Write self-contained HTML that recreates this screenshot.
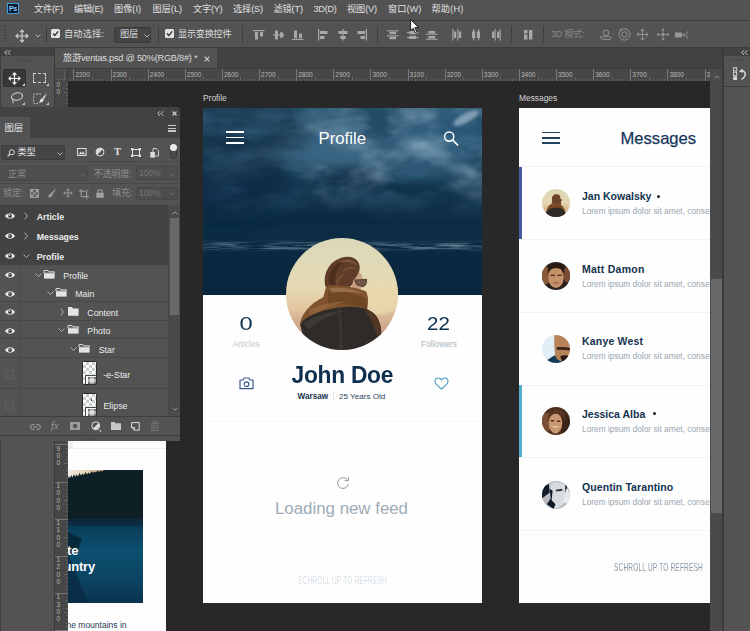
<!DOCTYPE html>
<html lang="zh">
<head>
<meta charset="utf-8">
<title>Photoshop</title>
<style>
html,body{margin:0;padding:0;}
body{width:750px;height:631px;overflow:hidden;background:#282828;position:relative;font-family:"Liberation Sans","Noto Sans CJK SC",sans-serif;color:#ddd;}
.a{position:absolute;}
.t{position:absolute;white-space:nowrap;line-height:1;}
svg{position:absolute;overflow:visible;}
#menubar{left:0;top:0;width:750px;height:20px;background:#535353;}
#menubar .t{font-size:9.2px;color:#e0e0e0;top:5px;letter-spacing:-0.3px;}
#optbar{left:0;top:21px;width:750px;height:26px;background:#535353;}
#optbar .t{font-size:9.2px;color:#dcdcdc;letter-spacing:-0.3px;}
.sep{position:absolute;top:5px;width:1px;height:17px;background:#3e3e3e;}
#tabbar{left:55px;top:48px;width:668px;height:20px;background:#424242;}
#tab{left:0;top:0;width:162px;height:20px;background:#535353;}
#rulerh{left:55px;top:69px;width:655px;height:12px;background:#474747;overflow:hidden;}
#rulerv{left:55px;top:81px;width:13px;height:550px;background:#474747;overflow:hidden;}
.rl{position:absolute;font-size:6.5px;color:#b8b8b8;line-height:1;}
.tk{position:absolute;background:#777;}
#tools{left:0;top:47px;width:54px;height:584px;background:#535353;}
#layers{left:0;top:107px;width:180.3px;height:333.5px;background:#535353;border-top-right-radius:4px;overflow:hidden;}
#vscroll{left:710px;top:69px;width:12px;height:562px;background:#4a4a4a;}
#rpanel{left:724px;top:48px;width:26px;height:583px;background:#535353;}
.ab{background:#fff;overflow:hidden;}
.row{position:absolute;left:0;width:168px;background:#535353;}
.row.dk{background:#424242;}
.row .nm{position:absolute;font-size:9px;color:#e8e8e8;line-height:1;white-space:nowrap;}
.ablabel{font-size:8.4px;color:#d6d6d6;}
.msg .nm{position:absolute;left:63px;font-size:10.5px;font-weight:bold;color:#14324e;white-space:nowrap;line-height:1;}
.msg .lo{position:absolute;left:63px;font-size:8.35px;color:#9aa7b2;white-space:nowrap;line-height:1;}
.msg{position:absolute;left:0;width:200px;height:72px;}
.av{position:absolute;left:23px;width:28px;height:28px;border-radius:50%;overflow:hidden;}
.av svg{width:28px;height:28px;}
</style>
</head>
<body>
<!-- CANVAS -->
<div class="a" id="canvas" style="left:68px;top:81px;width:642px;height:550px;background:#282828;"></div>

<!-- Article artboard (partially visible) -->
<div class="a ab" style="left:68px;top:441px;width:98px;height:190px;background:#fdfdfd;">
  <div class="a" style="left:0;top:0;width:5px;height:7px;background:#eef0f2;"></div>
  <div class="a" style="left:0;top:7px;width:98px;height:1px;background:#efefef;"></div>
  <div class="a" style="left:0;top:29px;width:75px;height:133px;overflow:hidden;background:#0e1f26;">
    <svg width="75" height="133" viewBox="0 0 75 133" style="left:0;top:0;">
      <defs>
        <linearGradient id="wat" x1="0" y1="0" x2="0" y2="1">
          <stop offset="0" stop-color="#0b3a55"/><stop offset="0.35" stop-color="#0a4f6e"/><stop offset="0.7" stop-color="#0b4463"/><stop offset="1" stop-color="#0a3350"/>
        </linearGradient>
        <linearGradient id="skyA" x1="0" y1="0" x2="1" y2="0">
          <stop offset="0" stop-color="#f3ede3"/><stop offset="0.3" stop-color="#e2c9a8"/><stop offset="0.55" stop-color="#b98a5c"/><stop offset="0.7" stop-color="#3a3028"/>
        </linearGradient>
        <filter id="bl1"><feGaussianBlur stdDeviation="1.2"/></filter>
      </defs>
      <rect x="0" y="0" width="75" height="10" fill="url(#skyA)"/>
      <path d="M0,8.5 L1,6 L2,8 L3.5,5 L4.5,7.5 L6,4 L7,7 L8.5,4.5 L10,6.5 L11.5,3 L13,5.5 L14.5,3.5 L16,5 L17.5,2 L19,4.5 L20.5,2.5 L22,4 L23.5,1 L25,3 L26.5,1.5 L28,2.5 L29.5,0.5 L31,2 L32.5,0.5 L34,1.5 L36,0 L75,0 L75,56 L0,56 Z" fill="#0e1f26"/>
      <rect x="0" y="52" width="75" height="81" fill="url(#wat)"/>
      <rect x="0" y="49" width="75" height="7" fill="#0c2c40" filter="url(#bl1)"/>
      <path d="M0,62 L14,69 L10,80 L0,86 Z" fill="#08283c"/>
      <path d="M0,84 L20,132 L0,133 Z" fill="#082c45" opacity="0.85"/>
    </svg>
    <div class="t" style="left:-4.3px;top:73.5px;font-size:13px;font-weight:bold;color:#fff;letter-spacing:-0.2px;">ite</div>
    <div class="t" style="left:-4.5px;top:89.5px;font-size:13px;font-weight:bold;color:#fff;letter-spacing:-0.2px;">untry</div>
  </div>
  <div class="t" style="left:-3.4px;top:179.5px;font-size:8.5px;color:#1f3c55;">ine mountains in</div>
</div>
<!-- Profile artboard -->
<div class="t ablabel" style="left:203px;top:94px;">Profile</div>
<div class="a ab" id="profile" style="left:203px;top:108px;width:279px;height:495px;background:#fefefe;">
  <svg width="279" height="187" viewBox="0 0 279 187" style="left:0;top:0;">
    <defs>
      <linearGradient id="sky" x1="0" y1="0" x2="0" y2="1">
        <stop offset="0" stop-color="#244d68"/><stop offset="0.27" stop-color="#1f4762"/><stop offset="0.45" stop-color="#14374f"/><stop offset="0.58" stop-color="#0c2b43"/><stop offset="0.66" stop-color="#0c2d45"/><stop offset="0.80" stop-color="#0a2840"/><stop offset="1" stop-color="#09263d"/>
      </linearGradient>
      <linearGradient id="fadeUp" x1="0" y1="0" x2="0" y2="1">
        <stop offset="0" stop-color="#fff" stop-opacity="1"/><stop offset="0.35" stop-color="#fff" stop-opacity="0.95"/><stop offset="0.56" stop-color="#fff" stop-opacity="0.15"/><stop offset="0.62" stop-color="#fff" stop-opacity="0"/>
      </linearGradient>
      <linearGradient id="fadeL" x1="0" y1="0" x2="1" y2="0"><stop offset="0" stop-color="#fff" stop-opacity="0.1"/><stop offset="0.25" stop-color="#fff" stop-opacity="0.22"/><stop offset="0.45" stop-color="#fff" stop-opacity="1"/><stop offset="1" stop-color="#fff" stop-opacity="1"/></linearGradient>
      <mask id="mLeft"><rect width="279" height="187" fill="url(#fadeL)"/></mask>
      <mask id="mUp"><rect width="279" height="187" fill="url(#fadeUp)"/></mask>
      <filter id="cloudL" x="0" y="0" width="100%" height="100%">
        <feTurbulence type="fractalNoise" baseFrequency="0.016 0.03" numOctaves="4" seed="7"/>
        <feColorMatrix type="matrix" values="0 0 0 0 0.45  0 0 0 0 0.62  0 0 0 0 0.74  2.6 0 0 0 -1.15"/>
      </filter>
      <filter id="cloudD" x="0" y="0" width="100%" height="100%">
        <feTurbulence type="fractalNoise" baseFrequency="0.014 0.035" numOctaves="4" seed="23"/>
        <feColorMatrix type="matrix" values="0 0 0 0 0.04  0 0 0 0 0.13  0 0 0 0 0.22  0 2.8 0 0 -1.25"/>
      </filter>
      <filter id="wave" x="0" y="0" width="100%" height="100%">
        <feTurbulence type="fractalNoise" baseFrequency="0.03 0.5" numOctaves="3" seed="4"/>
        <feColorMatrix type="matrix" values="0 0 0 0 0.30  0 0 0 0 0.43  0 0 0 0 0.52  3 0 0 0 -1.1"/>
      </filter>
      <linearGradient id="waveFade" x1="0" y1="0" x2="0" y2="1">
        <stop offset="0" stop-color="#fff" stop-opacity="0"/><stop offset="0.45" stop-color="#fff" stop-opacity="1"/><stop offset="0.7" stop-color="#fff" stop-opacity="0.8"/><stop offset="1" stop-color="#fff" stop-opacity="0"/>
      </linearGradient>
      <mask id="mWave"><rect x="0" y="132" width="279" height="12" fill="url(#waveFade)"/></mask>
      <filter id="b8" x="-50%" y="-50%" width="200%" height="200%"><feGaussianBlur stdDeviation="8"/></filter>
      <filter id="b4" x="-50%" y="-50%" width="200%" height="200%"><feGaussianBlur stdDeviation="4"/></filter>
      <filter id="b2" x="-50%" y="-50%" width="200%" height="200%"><feGaussianBlur stdDeviation="1.5"/></filter>
      <clipPath id="skyclip"><rect x="0" y="0" width="279" height="187"/></clipPath>
    </defs>
    <g clip-path="url(#skyclip)">
      <rect width="279" height="187" fill="url(#sky)"/>
      <ellipse cx="10" cy="70" rx="75" ry="45" fill="#0e2c44" filter="url(#b8)" opacity="0.85"/>
      <ellipse cx="25" cy="25" rx="80" ry="45" fill="#12344d" filter="url(#b8)" opacity="0.75"/>
      <ellipse cx="138" cy="42" rx="42" ry="20" fill="#4a7492" filter="url(#b8)" opacity="0.7"/>
      <ellipse cx="235" cy="28" rx="50" ry="26" fill="#2f5c7c" filter="url(#b8)" opacity="0.8"/>
      <ellipse cx="218" cy="52" rx="55" ry="24" fill="#3a6583" filter="url(#b8)" opacity="0.45"/>
      <ellipse cx="205" cy="82" rx="45" ry="8" fill="#102e47" filter="url(#b4)" opacity="0.7"/>
      <ellipse cx="150" cy="70" rx="30" ry="10" fill="#12324c" filter="url(#b4)" opacity="0.7"/>
      <g mask="url(#mUp)">
        <g mask="url(#mLeft)"><rect width="279" height="187" filter="url(#cloudL)" opacity="0.6"/></g>
        <rect width="279" height="187" filter="url(#cloudD)" opacity="0.75"/>
      </g>
      <ellipse cx="263" cy="10" rx="14" ry="4.5" fill="#86a6ba" filter="url(#b2)" transform="rotate(-28 263 10)" opacity="0.9"/>
      <ellipse cx="225" cy="45" rx="16" ry="4" fill="#6f93aa" filter="url(#b4)" transform="rotate(-20 225 45)" opacity="0.7"/>
      <rect x="0" y="114" width="279" height="3" fill="#0a2239" filter="url(#b2)" opacity="0.3"/>
      <g mask="url(#mWave)" opacity="0.6"><rect x="0" y="126" width="279" height="20" filter="url(#wave)"/></g>
    </g>
  </svg>
  <!-- hamburger -->
  <div class="a" style="left:22.5px;top:23.3px;width:18px;height:1.7px;background:#fff;"></div>
  <div class="a" style="left:22.5px;top:28.7px;width:18px;height:1.7px;background:#fff;"></div>
  <div class="a" style="left:22.5px;top:34.1px;width:18px;height:1.7px;background:#fff;"></div>
  <div class="t" id="ptitle" style="left:115.5px;top:22.5px;font-size:16.8px;color:#fff;">Profile</div>
  <svg width="16" height="16" viewBox="0 0 16 16" style="left:240px;top:22px;"><circle cx="6.2" cy="6.6" r="4.6" fill="none" stroke="#fff" stroke-width="1.5"/><path d="M9.6,10 L14.6,15" stroke="#fff" stroke-width="1.7" stroke-linecap="round"/></svg>

  <!-- avatar -->
  <svg width="112" height="112" viewBox="30 18 590 590" style="left:82.8px;top:130.4px;">
    <defs>
      <linearGradient id="avbg" x1="0" y1="0" x2="0" y2="1">
        <stop offset="0" stop-color="#dbd9b9"/><stop offset="0.45" stop-color="#e6d9b3"/><stop offset="0.62" stop-color="#e3c79f"/><stop offset="0.78" stop-color="#cfa98c"/><stop offset="1" stop-color="#a58f86"/>
      </linearGradient>
      <clipPath id="avc"><circle cx="325" cy="313" r="295"/></clipPath>
      <filter id="b6" x="-50%" y="-50%" width="200%" height="200%"><feGaussianBlur stdDeviation="6"/></filter>
    </defs>
    <g clip-path="url(#avc)">
      <rect x="30" y="18" width="590" height="590" fill="url(#avbg)"/>
      <ellipse cx="520" cy="330" rx="120" ry="90" fill="#ead9ae" filter="url(#b6)" opacity="0.8"/>
      <path d="M400,190 C428,200 438,225 432,246 L438,262 L424,288 L385,296 L372,250 Z" fill="#c9a183"/>
      <ellipse cx="398" cy="262" rx="24" ry="24" fill="#c49a7c"/>
      <path d="M238,275 C222,200 262,132 340,118 C398,110 428,150 416,192 C408,215 396,232 384,240 C382,262 372,276 350,282 C300,290 252,292 238,275 Z" fill="#5f3c27"/>
      <path d="M255,255 C250,200 285,150 345,132 C300,165 285,210 290,272 Z" fill="#452a1b" opacity="0.75"/>
      <path d="M300,150 C340,125 390,130 405,165 C380,140 340,140 300,150 Z" fill="#8c6448" opacity="0.8"/>
      <path d="M320,200 C340,170 380,160 408,185 C385,175 350,180 320,200 Z" fill="#86593c" opacity="0.7"/>
      <path d="M290,255 C295,225 320,205 350,200 C330,215 310,235 305,270 Z" fill="#7a5138" opacity="0.6"/>
      <path d="M390,236 L456,233 C460,252 452,272 436,277 L408,270 C398,262 392,252 390,236 Z" fill="#5c4638"/>
      <path d="M400,242 L450,240 C451,252 446,264 436,268 L412,263 C405,258 402,250 400,242 Z" fill="#8a6a55" opacity="0.55"/>
      <path d="M242,272 C300,258 400,278 452,300 C466,330 464,368 457,392 C400,372 330,382 252,402 C182,422 132,442 104,474 C108,420 160,360 226,330 Z" fill="#80532f"/>
      <path d="M250,300 C320,290 400,310 450,340 C455,360 458,378 457,392 C400,365 330,360 250,375 Z" fill="#66401f" opacity="0.65"/>
      <path d="M262,282 C320,272 390,290 440,310 C400,305 330,298 270,305 Z" fill="#a37b55" opacity="0.7"/>
      <path d="M150,400 C200,370 280,350 360,352 C300,365 220,390 160,430 Z" fill="#9a6c42" opacity="0.6"/>
      <path d="M104,474 C130,432 200,402 300,386 C380,376 440,380 470,400 C512,420 532,470 532,520 L500,610 L140,610 Z" fill="#2f2b29"/>
      <path d="M120,470 C170,430 260,405 350,398 C280,420 200,445 150,500 Z" fill="#4a423e" opacity="0.6"/>
      <path d="M300,390 C310,450 312,530 310,610 L330,610 C330,520 322,440 318,388 Z" fill="#3e3835" opacity="0.8"/>
      <path d="M470,400 C512,420 532,470 532,520 L520,560 C500,500 480,440 440,395 Z" fill="#5a3a26" opacity="0.8"/>
    </g>
  </svg>

  <div class="t" style="left:34.5px;top:206.3px;font-size:19px;color:#0e3050;width:16px;text-align:center;transform:scaleX(1.25);transform-origin:50% 50%;">0</div>
  <div class="t" id="art" style="left:29.5px;top:232px;font-size:8.3px;color:#c2cbd3;">Articles</div>
  <div class="t" style="left:224px;top:206px;font-size:19px;color:#0e3050;transform:scaleX(1.08);transform-origin:0 50%;">22</div>
  <div class="t" id="fol" style="left:218px;top:232px;font-size:8.4px;color:#a9b6c0;">Followers</div>

  <svg width="15" height="13" viewBox="0 0 15 13" style="left:35.5px;top:268.5px;"><path d="M1,3 H4 L5.2,1 H9.8 L11,3 H14 V11.6 H1 Z" fill="none" stroke="#3b5b8f" stroke-width="1.2" stroke-linejoin="round"/><circle cx="7.5" cy="7.2" r="2.3" fill="none" stroke="#3b5b8f" stroke-width="1.2"/></svg>
  <svg width="15" height="13" viewBox="0 0 15 13" style="left:230.5px;top:268.5px;"><path d="M7.5,12 C4,9.3 1,7 1,4.2 C1,2.3 2.4,1 4.1,1 C5.5,1 6.8,1.8 7.5,3.1 C8.2,1.8 9.5,1 10.9,1 C12.6,1 14,2.3 14,4.2 C14,7 11,9.3 7.5,12 Z" fill="none" stroke="#4a9cc0" stroke-width="1.1" stroke-linejoin="round"/></svg>

  <div class="t" id="jd" style="left:88.6px;top:255.5px;font-size:22.8px;font-weight:bold;color:#0e2f4f;letter-spacing:-0.3px;transform:scaleY(1.06);transform-origin:50% 85%;">John Doe</div>
  <div class="t" id="wa" style="left:94.5px;top:285.3px;font-size:8.2px;font-weight:bold;color:#14324e;">Warsaw</div>
  <div class="a" style="left:130px;top:283px;width:1px;height:10px;background:#e3e6e9;"></div>
  <div class="t" id="yo" style="left:136px;top:285.3px;font-size:8.1px;color:#2c4660;">25 Years Old</div>
  <div class="a" style="left:0;top:312.5px;width:279px;height:1px;background:#f5f6f7;"></div>

  <svg width="16" height="14" viewBox="0 0 16 14" style="left:132px;top:368px;"><path d="M12.6,4.2 A5.4,5.4 0 1 0 13.3,8.2" fill="none" stroke="#8c9ca8" stroke-width="1"/><path d="M13.4,0.8 V4.6 H9.6" fill="none" stroke="#8c9ca8" stroke-width="1"/></svg>
  <div class="t" id="lnf" style="left:72px;top:392.5px;font-size:16.85px;color:#9dacb7;">Loading new feed</div>
  <div class="t" id="sc1" style="left:95px;top:466.5px;font-size:11px;color:#d9e0e5;transform:scaleX(0.595);transform-origin:0 50%;letter-spacing:0.3px;">SCHROLL UP TO REFRESH</div>
</div>
<!-- Messages artboard -->
<div class="t ablabel" style="left:519px;top:94px;">Messages</div>
<div class="a ab" id="messages" style="left:519px;top:108px;width:191px;height:495px;background:#fefefe;">
  <div class="a" style="left:22.5px;top:23.5px;width:18.5px;height:1.7px;background:#1d4461;"></div>
  <div class="a" style="left:22.5px;top:28.9px;width:18.5px;height:1.7px;background:#1d4461;"></div>
  <div class="a" style="left:22.5px;top:34.3px;width:18.5px;height:1.7px;background:#1d4461;"></div>
  <div class="t" id="mtitle" style="left:101.5px;top:22.5px;font-size:16.6px;color:#14365a;-webkit-text-stroke:0.25px #14365a;">Messages</div>
  <div class="a" style="left:0;top:58px;width:191px;height:1px;background:#f1f2f3;"></div>

  <!-- rows -->
  <div class="msg" style="top:59px;">
    <div class="a" style="left:0;top:0;width:2.5px;height:73px;background:#4a5ba0;"></div>
    <div class="av" style="top:22.4px;">
      <svg width="29" height="29" viewBox="0 0 29 29" style="left:0;top:0;">
        <defs><linearGradient id="a1" x1="0" y1="0" x2="0" y2="1"><stop offset="0" stop-color="#dbd8b8"/><stop offset="0.5" stop-color="#e6d6b0"/><stop offset="0.75" stop-color="#d9b48e"/><stop offset="1" stop-color="#b49a88"/></linearGradient></defs>
        <rect width="29" height="29" fill="url(#a1)"/>
        <path d="M10.5,11 C9.5,7 13,5 16,5.5 C18.5,6 19.5,8 19,10 L21,11.5 L19.5,13 C20,14 20,15 19.5,16 L10,15 Z" fill="#6b432a"/>
        <path d="M5,21 C6,17 10,15 14,14 C17,14 19,15 20.5,17 C23,19 24,22 24,25 L22,29 L6,29 Z" fill="#7a4a26"/>
        <path d="M4,24 C6,20.5 12,19 17,19.5 C21,20 24,23 24.5,26 L23,30 L5,30 Z" fill="#2d2927"/>
      </svg>
    </div>
    <div class="nm" id="n1" style="top:24px;">Jan Kowalsky</div>
    <div class="a" style="left:137.5px;top:27.5px;width:3px;height:3px;border-radius:50%;background:#222;"></div>
    <div class="lo" style="top:40px;"><span class="lo1">Lorem ipsum dolor sit amet,</span> consectetur</div>
  </div>
  <div class="a" style="left:0;top:131.2px;width:191px;height:1px;background:#f1f2f3;"></div>

  <div class="msg" style="top:131.6px;">
    <div class="av" style="top:22.4px;">
      <svg width="29" height="29" viewBox="0 0 29 29" style="left:0;top:0;">
        <rect width="29" height="29" fill="#2a211c"/>
        <ellipse cx="4" cy="14" rx="5" ry="9" fill="#8a5a3a"/>
        <ellipse cx="26" cy="13" rx="4" ry="8" fill="#7a4c30"/>
        <ellipse cx="14.5" cy="16" rx="8" ry="11" fill="#c4916a"/>
        <path d="M6,13 C5,5 10,1.5 15,1.5 C20,1.5 24,5 23,13 C22,8 19,6.5 14.5,6.5 C10,6.5 7,8 6,13 Z" fill="#2a1a12"/>
        <rect x="9" y="13" width="4.5" height="1.6" fill="#5a3826"/><rect x="16" y="13" width="4.5" height="1.6" fill="#5a3826"/>
        <rect x="11.5" y="21" width="6" height="1.2" fill="#8a5a44"/>
      </svg>
    </div>
    <div class="nm" id="n2" style="top:24px;letter-spacing:0.25px;">Matt Damon</div>
    <div class="lo" style="top:40px;"><span class="lo1">Lorem ipsum dolor sit amet,</span> consectetur</div>
  </div>
  <div class="a" style="left:0;top:203.8px;width:191px;height:1px;background:#f1f2f3;"></div>

  <div class="msg" style="top:204.2px;">
    <div class="av" style="top:22.4px;">
      <svg width="29" height="29" viewBox="0 0 29 29" style="left:0;top:0;">
        <rect width="29" height="29" fill="#e1eef5"/>
        <path d="M4,27 L13,21 L22,26 L20,30 L4,30 Z" fill="#143a55"/>
        <path d="M13,0 C20,-1 29,4 30,14 C30,22 26,27 21,27.5 C17,27 14,24 13.5,20 C13,14 12,6 13,0 Z" fill="#b9835a"/>
        <path d="M15,13 C18,12 24,12.5 29,13.5 L29,16 C24,15 19,15 15.5,15.5 Z" fill="#3a2418"/>
        <path d="M19,22 C22,20.5 26,21 28,22 C27,26 24,28 21,27.5 C20,26 19.5,24 19,22 Z" fill="#2a1a14"/>
      </svg>
    </div>
    <div class="nm" id="n3" style="top:24px;letter-spacing:0.18px;">Kanye West</div>
    <div class="lo" style="top:40px;"><span class="lo1">Lorem ipsum dolor sit amet,</span> consectetur</div>
  </div>
  <div class="a" style="left:0;top:276.5px;width:191px;height:1px;background:#f1f2f3;"></div>

  <div class="msg" style="top:276.8px;">
    <div class="a" style="left:0;top:0;width:2.5px;height:73px;background:#58aed0;"></div>
    <div class="av" style="top:22.4px;">
      <svg width="29" height="29" viewBox="0 0 29 29" style="left:0;top:0;">
        <rect width="29" height="29" fill="#4a2e1e"/>
        <ellipse cx="5" cy="16" rx="5" ry="10" fill="#7a4e30"/>
        <ellipse cx="24" cy="18" rx="5" ry="10" fill="#3a2418"/>
        <ellipse cx="14" cy="17" rx="7" ry="10.5" fill="#c99870"/>
        <path d="M6,16 C5,7 10,2 15,2 C21,2 25,8 24,16 C22,9 18,6 13,7 C9,8 7,11 6,16 Z" fill="#5a3620"/>
        <path d="M10,19.5 C12,22 16,22 18,19.5 C16,20.5 12,20.5 10,19.5 Z" fill="#f0e0d0"/>
        <rect x="9" y="13.5" width="3.5" height="1.4" fill="#3a2418"/><rect x="15.5" y="14" width="3.5" height="1.4" fill="#3a2418"/>
      </svg>
    </div>
    <div class="nm" id="n4" style="top:24px;">Jessica Alba</div>
    <div class="a" style="left:133.5px;top:27.5px;width:3px;height:3px;border-radius:50%;background:#222;"></div>
    <div class="lo" style="top:40px;"><span class="lo1">Lorem ipsum dolor sit amet,</span> consectetur</div>
  </div>
  <div class="a" style="left:0;top:349.3px;width:191px;height:1px;background:#f1f2f3;"></div>

  <div class="msg" style="top:350.3px;">
    <div class="av" style="top:22.4px;">
      <svg width="29" height="29" viewBox="0 0 29 29" style="left:0;top:0;">
        <rect width="29" height="29" fill="#b8bcbf"/>
        <path d="M0,6 L7,3 L8,12 L0,18 Z" fill="#101c28"/>
        <path d="M9,3 C14,0 22,1 25,6 L25,20 C22,26 16,29 12,28 L9,20 Z" fill="#d9dcde"/>
        <path d="M8,8 L11,10 L10,20 L14,24 L12,29 L5,24 L9,18 Z" fill="#0e1a26"/>
        <path d="M14,9 L21,8 L21,10 L15,11 Z" fill="#2a323a"/>
        <path d="M24,4 L26,6 L25.5,14 L24,12 Z" fill="#1a2630"/>
        <path d="M25,8 C29,10 30,18 28,24 L22,22 Z" fill="#e8eaeb"/>
      </svg>
    </div>
    <div class="nm" id="n5" style="top:24px;letter-spacing:0.1px;">Quentin Tarantino</div>
    <div class="lo" style="top:40px;"><span class="lo1">Lorem ipsum dolor sit amet,</span> consectetur</div>
  </div>
  <div class="a" style="left:0;top:421.8px;width:191px;height:1px;background:#f1f2f3;"></div>
  <div class="a" style="left:0;top:423px;width:191px;height:72px;background:#fdfdfd;"></div>

  <div class="t" id="sc2" style="left:95px;top:454px;font-size:11px;color:#8b9aa8;transform:scaleX(0.595);transform-origin:0 50%;letter-spacing:0.3px;">SCHROLL UP TO REFRESH</div>
</div>
<!-- MENU BAR -->
<div class="a" id="menubar">
  <div class="a" style="left:7px;top:3px;width:12px;height:11px;background:#0b1b33;box-shadow:inset 0 0 0 1px #3fa0dc;"></div>
  <div class="t" style="left:9px;top:5px;font-size:7px;font-weight:bold;color:#8fd0ff;letter-spacing:-0.3px;">Ps</div>
  <div class="t" id="m1" style="letter-spacing:-0.22px;left:34px;">文件(F)</div>
  <div class="t" id="m2" style="left:74px;">编辑(E)</div>
  <div class="t" id="m3" style="letter-spacing:0px;left:114px;">图像(I)</div>
  <div class="t" id="m4" style="letter-spacing:0px;left:152.5px;">图层(L)</div>
  <div class="t" id="m5" style="letter-spacing:-0.24px;left:193px;">文字(Y)</div>
  <div class="t" id="m6" style="letter-spacing:-0.12px;left:233px;">选择(S)</div>
  <div class="t" id="m7" style="letter-spacing:-0.14px;left:273.5px;">滤镜(T)</div>
  <div class="t" id="m8" style="left:313.5px;">3D(D)</div>
  <div class="t" id="m9" style="letter-spacing:-0.12px;left:347px;">视图(V)</div>
  <div class="t" id="m10" style="letter-spacing:0.04px;left:388px;">窗口(W)</div>
  <div class="t" id="m11" style="letter-spacing:0.18px;left:431.5px;">帮助(H)</div>
</div>
<div class="a" style="left:0;top:20px;width:750px;height:1px;background:#3c3c3c;"></div>

<!-- OPTIONS BAR -->
<div class="a" id="optbar">
  <!-- grip -->
  <div class="a" style="left:4px;top:5px;width:2px;height:17px;background:repeating-linear-gradient(to bottom,#3e3e3e 0,#3e3e3e 1px,transparent 1px,transparent 3px);"></div>
  <!-- move icon -->
  <svg width="14" height="14" viewBox="0 0 14 14" style="left:15px;top:7.5px;"><g fill="none" stroke="#d8d8d8" stroke-width="1.1"><path d="M7,1.2 V12.8 M1.2,7 H12.8"/><path d="M5,3.2 L7,1 L9,3.2 M5,10.8 L7,13 L9,10.8 M3.2,5 L1,7 L3.2,9 M10.8,5 L13,7 L10.8,9"/></g></svg>
  <svg width="6" height="4" viewBox="0 0 6 4" style="left:34.5px;top:13px;"><path d="M0.5,0.5 L3,3 L5.5,0.5" fill="none" stroke="#bdbdbd" stroke-width="0.9"/></svg>
  <div class="sep" style="left:46px;"></div>
  <!-- checkbox 1 -->
  <div class="a" style="left:51px;top:8px;width:9px;height:9px;background:#e2e2e2;border-radius:1.5px;"></div>
  <svg width="9" height="9" viewBox="0 0 9 9" style="left:51px;top:8px;"><path d="M2,4.4 L3.9,6.4 L7.2,2.4" fill="none" stroke="#333" stroke-width="1.4"/></svg>
  <div class="t" id="o1" style="letter-spacing:0.14px;left:64px;top:9px;">自动选择:</div>
  <div class="a" style="left:113.5px;top:5.5px;width:37px;height:16px;background:#454545;border:1px solid #3a3a3a;box-sizing:border-box;border-radius:2px;"></div>
  <div class="t" id="o2" style="left:120px;top:9.3px;">图层</div>
  <svg width="6" height="4" viewBox="0 0 6 4" style="left:143.5px;top:12.5px;"><path d="M0.5,0.5 L3,3 L5.5,0.5" fill="none" stroke="#bdbdbd" stroke-width="0.9"/></svg>
  <div class="sep" style="left:158px;"></div>
  <!-- checkbox 2 -->
  <div class="a" style="left:165px;top:8px;width:9px;height:9px;background:#e2e2e2;border-radius:1.5px;"></div>
  <svg width="9" height="9" viewBox="0 0 9 9" style="left:165px;top:8px;"><path d="M2,4.4 L3.9,6.4 L7.2,2.4" fill="none" stroke="#333" stroke-width="1.4"/></svg>
  <div class="t" id="o3" style="left:178px;top:9px;">显示变换控件</div>
  <div class="sep" style="left:242px;"></div>

  <!-- align icons group 1 (vertical aligns) -->
  <svg width="12" height="10" viewBox="0 0 12 10" style="left:253px;top:8.5px;"><g fill="#a8a8a8"><rect x="0" y="0" width="11.5" height="1.2"/><rect x="2" y="2" width="3" height="7.5"/><rect x="7" y="2" width="3" height="4.5"/></g></svg>
  <svg width="12" height="10" viewBox="0 0 12 10" style="left:272.5px;top:8.5px;"><g fill="#a8a8a8"><rect x="0" y="4.4" width="11.5" height="1.2"/><rect x="2" y="0.5" width="3" height="9"/><rect x="7" y="2.3" width="3" height="5.4"/></g></svg>
  <svg width="12" height="10" viewBox="0 0 12 10" style="left:292px;top:8.5px;"><g fill="#a8a8a8"><rect x="0" y="8.8" width="11.5" height="1.2"/><rect x="2" y="0.5" width="3" height="7.5"/><rect x="7" y="3.5" width="3" height="4.5"/></g></svg>
  <!-- align icons group 2 (horizontal aligns) -->
  <svg width="10" height="12" viewBox="0 0 10 12" style="left:318px;top:7.5px;"><g fill="#a8a8a8"><rect x="0" y="0" width="1.2" height="11.5"/><rect x="2" y="2" width="7.5" height="3"/><rect x="2" y="7" width="4.5" height="3"/></g></svg>
  <svg width="10" height="12" viewBox="0 0 10 12" style="left:338px;top:7.5px;"><g fill="#a8a8a8"><rect x="4.4" y="0" width="1.2" height="11.5"/><rect x="0.5" y="2" width="9" height="3"/><rect x="2.3" y="7" width="5.4" height="3"/></g></svg>
  <svg width="10" height="12" viewBox="0 0 10 12" style="left:356.5px;top:7.5px;"><g fill="#a8a8a8"><rect x="8.8" y="0" width="1.2" height="11.5"/><rect x="0.5" y="2" width="7.5" height="3"/><rect x="3.5" y="7" width="4.5" height="3"/></g></svg>
  <div class="sep" style="left:377px;"></div>
  <!-- distribute group 1 -->
  <svg width="12" height="10" viewBox="0 0 12 10" style="left:387px;top:8.5px;"><g fill="#a8a8a8"><rect x="0" y="0.3" width="11.5" height="1.1"/><rect x="2.5" y="1.8" width="6.5" height="2.4"/><rect x="0" y="5.3" width="11.5" height="1.1"/><rect x="2.5" y="6.8" width="6.5" height="2.4"/></g></svg>
  <svg width="12" height="10" viewBox="0 0 12 10" style="left:406.5px;top:8.5px;"><g fill="#a8a8a8"><rect x="0" y="2.2" width="11.5" height="1.1"/><rect x="2.5" y="1" width="6.5" height="3.2"/><rect x="0" y="7" width="11.5" height="1.1"/><rect x="2.5" y="5.8" width="6.5" height="3.2"/></g></svg>
  <svg width="12" height="10" viewBox="0 0 12 10" style="left:426px;top:8.5px;"><g fill="#a8a8a8"><rect x="0" y="3.6" width="11.5" height="1.1"/><rect x="2.5" y="1" width="6.5" height="2.4"/><rect x="0" y="8.6" width="11.5" height="1.1"/><rect x="2.5" y="6" width="6.5" height="2.4"/></g></svg>
  <!-- distribute group 2 -->
  <svg width="10" height="12" viewBox="0 0 10 12" style="left:452px;top:7.5px;"><g fill="#a8a8a8"><rect x="0.3" y="0" width="1.1" height="11.5"/><rect x="1.8" y="2.5" width="2.4" height="6.5"/><rect x="5.3" y="0" width="1.1" height="11.5"/><rect x="6.8" y="2.5" width="2.4" height="6.5"/></g></svg>
  <svg width="10" height="12" viewBox="0 0 10 12" style="left:471px;top:7.5px;"><g fill="#a8a8a8"><rect x="2.2" y="0" width="1.1" height="11.5"/><rect x="1" y="2.5" width="3.2" height="6.5"/><rect x="7" y="0" width="1.1" height="11.5"/><rect x="5.8" y="2.5" width="3.2" height="6.5"/></g></svg>
  <svg width="10" height="12" viewBox="0 0 10 12" style="left:491px;top:7.5px;"><g fill="#a8a8a8"><rect x="3.6" y="0" width="1.1" height="11.5"/><rect x="1" y="2.5" width="2.4" height="6.5"/><rect x="8.6" y="0" width="1.1" height="11.5"/><rect x="6" y="2.5" width="2.4" height="6.5"/></g></svg>
  <div class="sep" style="left:511px;"></div>
  <svg width="9" height="10" viewBox="0 0 9 10" style="left:524px;top:8.5px;"><g fill="#a8a8a8"><rect x="0" y="0" width="3.4" height="3.5"/><rect x="0" y="4.5" width="3.4" height="5"/><rect x="5" y="0" width="3.4" height="9.5"/></g></svg>
  <div class="sep" style="left:543px;"></div>
  <div class="t" id="o4" style="left:551px;top:9px;color:#858585;">3D 模式:</div>
  <!-- 3D icons -->
  <svg width="13" height="12" viewBox="0 0 13 12" style="left:599px;top:8px;"><g fill="none" stroke="#969696" stroke-width="1"><circle cx="7" cy="3.8" r="2.8"/><path d="M1,8.5 C3,6 6,9 8,7.5 C10,6.5 12,8 12,9.5 C11,11 3,11 1,8.5 Z"/></g></svg>
  <svg width="13" height="13" viewBox="0 0 13 13" style="left:617.5px;top:7px;"><g fill="none" stroke="#969696" stroke-width="1"><circle cx="6.5" cy="6.5" r="5.6"/><circle cx="6.5" cy="6.5" r="2.8"/><path d="M1.5,2.2 L3.2,1.2 L3.4,3.2" stroke-width="0.8"/></g></svg>
  <svg width="13" height="13" viewBox="0 0 14 14" style="left:636px;top:7px;"><g fill="none" stroke="#969696" stroke-width="1"><path d="M7,1.2 V12.8 M1.2,7 H12.8"/><path d="M5,3.2 L7,1 L9,3.2 M5,10.8 L7,13 L9,10.8 M3.2,5 L1,7 L3.2,9 M10.8,5 L13,7 L10.8,9"/></g></svg>
  <svg width="14" height="13" viewBox="0 0 14 13" style="left:655.5px;top:7px;"><g fill="#969696"><circle cx="7" cy="6.5" r="1.8"/><path d="M7,0.3 L8.8,2.6 H5.2 Z M7,12.7 L8.8,10.4 H5.2 Z M0.5,6.5 L2.9,4.8 V8.2 Z M13.5,6.5 L11.1,4.8 V8.2 Z"/><rect x="6.6" y="2.6" width="0.8" height="2"/><rect x="6.6" y="8.4" width="0.8" height="2"/><rect x="2.9" y="6.1" width="2" height="0.8"/><rect x="9.1" y="6.1" width="2" height="0.8"/></g></svg>
  <svg width="15" height="10" viewBox="0 0 15 10" style="left:675px;top:8.5px;"><rect x="0" y="2.5" width="7" height="5" fill="#969696"/><path d="M7,5 L9.5,3 V7 Z" fill="#969696"/><path d="M13.2,1 L10.8,5 L13.2,9" fill="none" stroke="#969696" stroke-width="0.9"/></svg>
</div>
<div class="a" style="left:0;top:47px;width:750px;height:1px;background:#3c3c3c;"></div>

<!-- TAB BAR -->
<div class="a" id="tabbar">
  <div class="a" id="tab"></div>
  <div class="t" id="tabt" style="left:8px;top:5.5px;font-size:9.2px;color:#dedede;letter-spacing:-0.22px;">旅游ventas.psd @ 50%(RGB/8#) *</div>
  <svg width="6" height="6" viewBox="0 0 6 6" style="left:149px;top:7.5px;"><path d="M0.7,0.7 L5.3,5.3 M5.3,0.7 L0.7,5.3" stroke="#cfcfcf" stroke-width="1.1"/></svg>
</div>
<div class="a" style="left:55px;top:68px;width:668px;height:1px;background:#3c3c3c;"></div>
<div class="a" id="rulerh">
<div class="a" style="left:0;top:0;width:13px;height:12px;background:#4b4b4b;border-right:1px solid #3e3e3e;box-sizing:border-box;"></div><div class="a" style="left:1px;top:10px;width:10px;height:1px;background:repeating-linear-gradient(to right,#6a6a6a 0,#6a6a6a 1px,transparent 1px,transparent 2px);"></div><div class="a" style="left:9px;top:1px;width:1px;height:10px;background:repeating-linear-gradient(to bottom,#6a6a6a 0,#6a6a6a 1px,transparent 1px,transparent 2px);"></div>
<div class="tk" style="left:14.69px;top:10px;width:1px;height:2px;opacity:.6;"></div>
<div class="tk" style="left:18.40px;top:0;width:1px;height:12px;"></div>
<div class="rl" style="left:20.40px;top:3px;">2200</div>
<div class="tk" style="left:22.11px;top:10px;width:1px;height:2px;opacity:.6;"></div>
<div class="tk" style="left:25.83px;top:10px;width:1px;height:2px;opacity:.6;"></div>
<div class="tk" style="left:29.54px;top:10px;width:1px;height:2px;opacity:.6;"></div>
<div class="tk" style="left:33.25px;top:10px;width:1px;height:2px;opacity:.6;"></div>
<div class="tk" style="left:36.97px;top:8px;width:1px;height:4px;opacity:.6;"></div>
<div class="tk" style="left:40.68px;top:10px;width:1px;height:2px;opacity:.6;"></div>
<div class="tk" style="left:44.39px;top:10px;width:1px;height:2px;opacity:.6;"></div>
<div class="tk" style="left:48.10px;top:10px;width:1px;height:2px;opacity:.6;"></div>
<div class="tk" style="left:51.82px;top:10px;width:1px;height:2px;opacity:.6;"></div>
<div class="tk" style="left:55.53px;top:0;width:1px;height:12px;"></div>
<div class="rl" style="left:57.53px;top:3px;">2300</div>
<div class="tk" style="left:59.24px;top:10px;width:1px;height:2px;opacity:.6;"></div>
<div class="tk" style="left:62.96px;top:10px;width:1px;height:2px;opacity:.6;"></div>
<div class="tk" style="left:66.67px;top:10px;width:1px;height:2px;opacity:.6;"></div>
<div class="tk" style="left:70.38px;top:10px;width:1px;height:2px;opacity:.6;"></div>
<div class="tk" style="left:74.10px;top:8px;width:1px;height:4px;opacity:.6;"></div>
<div class="tk" style="left:77.81px;top:10px;width:1px;height:2px;opacity:.6;"></div>
<div class="tk" style="left:81.52px;top:10px;width:1px;height:2px;opacity:.6;"></div>
<div class="tk" style="left:85.23px;top:10px;width:1px;height:2px;opacity:.6;"></div>
<div class="tk" style="left:88.95px;top:10px;width:1px;height:2px;opacity:.6;"></div>
<div class="tk" style="left:92.66px;top:0;width:1px;height:12px;"></div>
<div class="rl" style="left:94.66px;top:3px;">2400</div>
<div class="tk" style="left:96.37px;top:10px;width:1px;height:2px;opacity:.6;"></div>
<div class="tk" style="left:100.09px;top:10px;width:1px;height:2px;opacity:.6;"></div>
<div class="tk" style="left:103.80px;top:10px;width:1px;height:2px;opacity:.6;"></div>
<div class="tk" style="left:107.51px;top:10px;width:1px;height:2px;opacity:.6;"></div>
<div class="tk" style="left:111.23px;top:8px;width:1px;height:4px;opacity:.6;"></div>
<div class="tk" style="left:114.94px;top:10px;width:1px;height:2px;opacity:.6;"></div>
<div class="tk" style="left:118.65px;top:10px;width:1px;height:2px;opacity:.6;"></div>
<div class="tk" style="left:122.36px;top:10px;width:1px;height:2px;opacity:.6;"></div>
<div class="tk" style="left:126.08px;top:10px;width:1px;height:2px;opacity:.6;"></div>
<div class="tk" style="left:129.79px;top:0;width:1px;height:12px;"></div>
<div class="rl" style="left:131.79px;top:3px;">2500</div>
<div class="tk" style="left:133.50px;top:10px;width:1px;height:2px;opacity:.6;"></div>
<div class="tk" style="left:137.22px;top:10px;width:1px;height:2px;opacity:.6;"></div>
<div class="tk" style="left:140.93px;top:10px;width:1px;height:2px;opacity:.6;"></div>
<div class="tk" style="left:144.64px;top:10px;width:1px;height:2px;opacity:.6;"></div>
<div class="tk" style="left:148.36px;top:8px;width:1px;height:4px;opacity:.6;"></div>
<div class="tk" style="left:152.07px;top:10px;width:1px;height:2px;opacity:.6;"></div>
<div class="tk" style="left:155.78px;top:10px;width:1px;height:2px;opacity:.6;"></div>
<div class="tk" style="left:159.49px;top:10px;width:1px;height:2px;opacity:.6;"></div>
<div class="tk" style="left:163.21px;top:10px;width:1px;height:2px;opacity:.6;"></div>
<div class="tk" style="left:166.92px;top:0;width:1px;height:12px;"></div>
<div class="rl" style="left:168.92px;top:3px;">2600</div>
<div class="tk" style="left:170.63px;top:10px;width:1px;height:2px;opacity:.6;"></div>
<div class="tk" style="left:174.35px;top:10px;width:1px;height:2px;opacity:.6;"></div>
<div class="tk" style="left:178.06px;top:10px;width:1px;height:2px;opacity:.6;"></div>
<div class="tk" style="left:181.77px;top:10px;width:1px;height:2px;opacity:.6;"></div>
<div class="tk" style="left:185.49px;top:8px;width:1px;height:4px;opacity:.6;"></div>
<div class="tk" style="left:189.20px;top:10px;width:1px;height:2px;opacity:.6;"></div>
<div class="tk" style="left:192.91px;top:10px;width:1px;height:2px;opacity:.6;"></div>
<div class="tk" style="left:196.62px;top:10px;width:1px;height:2px;opacity:.6;"></div>
<div class="tk" style="left:200.34px;top:10px;width:1px;height:2px;opacity:.6;"></div>
<div class="tk" style="left:204.05px;top:0;width:1px;height:12px;"></div>
<div class="rl" style="left:206.05px;top:3px;">2700</div>
<div class="tk" style="left:207.76px;top:10px;width:1px;height:2px;opacity:.6;"></div>
<div class="tk" style="left:211.48px;top:10px;width:1px;height:2px;opacity:.6;"></div>
<div class="tk" style="left:215.19px;top:10px;width:1px;height:2px;opacity:.6;"></div>
<div class="tk" style="left:218.90px;top:10px;width:1px;height:2px;opacity:.6;"></div>
<div class="tk" style="left:222.62px;top:8px;width:1px;height:4px;opacity:.6;"></div>
<div class="tk" style="left:226.33px;top:10px;width:1px;height:2px;opacity:.6;"></div>
<div class="tk" style="left:230.04px;top:10px;width:1px;height:2px;opacity:.6;"></div>
<div class="tk" style="left:233.75px;top:10px;width:1px;height:2px;opacity:.6;"></div>
<div class="tk" style="left:237.47px;top:10px;width:1px;height:2px;opacity:.6;"></div>
<div class="tk" style="left:241.18px;top:0;width:1px;height:12px;"></div>
<div class="rl" style="left:243.18px;top:3px;">2800</div>
<div class="tk" style="left:244.89px;top:10px;width:1px;height:2px;opacity:.6;"></div>
<div class="tk" style="left:248.61px;top:10px;width:1px;height:2px;opacity:.6;"></div>
<div class="tk" style="left:252.32px;top:10px;width:1px;height:2px;opacity:.6;"></div>
<div class="tk" style="left:256.03px;top:10px;width:1px;height:2px;opacity:.6;"></div>
<div class="tk" style="left:259.75px;top:8px;width:1px;height:4px;opacity:.6;"></div>
<div class="tk" style="left:263.46px;top:10px;width:1px;height:2px;opacity:.6;"></div>
<div class="tk" style="left:267.17px;top:10px;width:1px;height:2px;opacity:.6;"></div>
<div class="tk" style="left:270.88px;top:10px;width:1px;height:2px;opacity:.6;"></div>
<div class="tk" style="left:274.60px;top:10px;width:1px;height:2px;opacity:.6;"></div>
<div class="tk" style="left:278.31px;top:0;width:1px;height:12px;"></div>
<div class="rl" style="left:280.31px;top:3px;">2900</div>
<div class="tk" style="left:282.02px;top:10px;width:1px;height:2px;opacity:.6;"></div>
<div class="tk" style="left:285.74px;top:10px;width:1px;height:2px;opacity:.6;"></div>
<div class="tk" style="left:289.45px;top:10px;width:1px;height:2px;opacity:.6;"></div>
<div class="tk" style="left:293.16px;top:10px;width:1px;height:2px;opacity:.6;"></div>
<div class="tk" style="left:296.88px;top:8px;width:1px;height:4px;opacity:.6;"></div>
<div class="tk" style="left:300.59px;top:10px;width:1px;height:2px;opacity:.6;"></div>
<div class="tk" style="left:304.30px;top:10px;width:1px;height:2px;opacity:.6;"></div>
<div class="tk" style="left:308.01px;top:10px;width:1px;height:2px;opacity:.6;"></div>
<div class="tk" style="left:311.73px;top:10px;width:1px;height:2px;opacity:.6;"></div>
<div class="tk" style="left:315.44px;top:0;width:1px;height:12px;"></div>
<div class="rl" style="left:317.44px;top:3px;">3000</div>
<div class="tk" style="left:319.15px;top:10px;width:1px;height:2px;opacity:.6;"></div>
<div class="tk" style="left:322.87px;top:10px;width:1px;height:2px;opacity:.6;"></div>
<div class="tk" style="left:326.58px;top:10px;width:1px;height:2px;opacity:.6;"></div>
<div class="tk" style="left:330.29px;top:10px;width:1px;height:2px;opacity:.6;"></div>
<div class="tk" style="left:334.01px;top:8px;width:1px;height:4px;opacity:.6;"></div>
<div class="tk" style="left:337.72px;top:10px;width:1px;height:2px;opacity:.6;"></div>
<div class="tk" style="left:341.43px;top:10px;width:1px;height:2px;opacity:.6;"></div>
<div class="tk" style="left:345.14px;top:10px;width:1px;height:2px;opacity:.6;"></div>
<div class="tk" style="left:348.86px;top:10px;width:1px;height:2px;opacity:.6;"></div>
<div class="tk" style="left:352.57px;top:0;width:1px;height:12px;"></div>
<div class="rl" style="left:354.57px;top:3px;">3100</div>
<div class="tk" style="left:356.28px;top:10px;width:1px;height:2px;opacity:.6;"></div>
<div class="tk" style="left:360.00px;top:10px;width:1px;height:2px;opacity:.6;"></div>
<div class="tk" style="left:363.71px;top:10px;width:1px;height:2px;opacity:.6;"></div>
<div class="tk" style="left:367.42px;top:10px;width:1px;height:2px;opacity:.6;"></div>
<div class="tk" style="left:371.14px;top:8px;width:1px;height:4px;opacity:.6;"></div>
<div class="tk" style="left:374.85px;top:10px;width:1px;height:2px;opacity:.6;"></div>
<div class="tk" style="left:378.56px;top:10px;width:1px;height:2px;opacity:.6;"></div>
<div class="tk" style="left:382.27px;top:10px;width:1px;height:2px;opacity:.6;"></div>
<div class="tk" style="left:385.99px;top:10px;width:1px;height:2px;opacity:.6;"></div>
<div class="tk" style="left:389.70px;top:0;width:1px;height:12px;"></div>
<div class="rl" style="left:391.70px;top:3px;">3200</div>
<div class="tk" style="left:393.41px;top:10px;width:1px;height:2px;opacity:.6;"></div>
<div class="tk" style="left:397.13px;top:10px;width:1px;height:2px;opacity:.6;"></div>
<div class="tk" style="left:400.84px;top:10px;width:1px;height:2px;opacity:.6;"></div>
<div class="tk" style="left:404.55px;top:10px;width:1px;height:2px;opacity:.6;"></div>
<div class="tk" style="left:408.27px;top:8px;width:1px;height:4px;opacity:.6;"></div>
<div class="tk" style="left:411.98px;top:10px;width:1px;height:2px;opacity:.6;"></div>
<div class="tk" style="left:415.69px;top:10px;width:1px;height:2px;opacity:.6;"></div>
<div class="tk" style="left:419.40px;top:10px;width:1px;height:2px;opacity:.6;"></div>
<div class="tk" style="left:423.12px;top:10px;width:1px;height:2px;opacity:.6;"></div>
<div class="tk" style="left:426.83px;top:0;width:1px;height:12px;"></div>
<div class="rl" style="left:428.83px;top:3px;">3300</div>
<div class="tk" style="left:430.54px;top:10px;width:1px;height:2px;opacity:.6;"></div>
<div class="tk" style="left:434.26px;top:10px;width:1px;height:2px;opacity:.6;"></div>
<div class="tk" style="left:437.97px;top:10px;width:1px;height:2px;opacity:.6;"></div>
<div class="tk" style="left:441.68px;top:10px;width:1px;height:2px;opacity:.6;"></div>
<div class="tk" style="left:445.40px;top:8px;width:1px;height:4px;opacity:.6;"></div>
<div class="tk" style="left:449.11px;top:10px;width:1px;height:2px;opacity:.6;"></div>
<div class="tk" style="left:452.82px;top:10px;width:1px;height:2px;opacity:.6;"></div>
<div class="tk" style="left:456.53px;top:10px;width:1px;height:2px;opacity:.6;"></div>
<div class="tk" style="left:460.25px;top:10px;width:1px;height:2px;opacity:.6;"></div>
<div class="tk" style="left:463.96px;top:0;width:1px;height:12px;"></div>
<div class="rl" style="left:465.96px;top:3px;">3400</div>
<div class="tk" style="left:467.67px;top:10px;width:1px;height:2px;opacity:.6;"></div>
<div class="tk" style="left:471.39px;top:10px;width:1px;height:2px;opacity:.6;"></div>
<div class="tk" style="left:475.10px;top:10px;width:1px;height:2px;opacity:.6;"></div>
<div class="tk" style="left:478.81px;top:10px;width:1px;height:2px;opacity:.6;"></div>
<div class="tk" style="left:482.53px;top:8px;width:1px;height:4px;opacity:.6;"></div>
<div class="tk" style="left:486.24px;top:10px;width:1px;height:2px;opacity:.6;"></div>
<div class="tk" style="left:489.95px;top:10px;width:1px;height:2px;opacity:.6;"></div>
<div class="tk" style="left:493.66px;top:10px;width:1px;height:2px;opacity:.6;"></div>
<div class="tk" style="left:497.38px;top:10px;width:1px;height:2px;opacity:.6;"></div>
<div class="tk" style="left:501.09px;top:0;width:1px;height:12px;"></div>
<div class="rl" style="left:503.09px;top:3px;">3500</div>
<div class="tk" style="left:504.80px;top:10px;width:1px;height:2px;opacity:.6;"></div>
<div class="tk" style="left:508.52px;top:10px;width:1px;height:2px;opacity:.6;"></div>
<div class="tk" style="left:512.23px;top:10px;width:1px;height:2px;opacity:.6;"></div>
<div class="tk" style="left:515.94px;top:10px;width:1px;height:2px;opacity:.6;"></div>
<div class="tk" style="left:519.66px;top:8px;width:1px;height:4px;opacity:.6;"></div>
<div class="tk" style="left:523.37px;top:10px;width:1px;height:2px;opacity:.6;"></div>
<div class="tk" style="left:527.08px;top:10px;width:1px;height:2px;opacity:.6;"></div>
<div class="tk" style="left:530.79px;top:10px;width:1px;height:2px;opacity:.6;"></div>
<div class="tk" style="left:534.51px;top:10px;width:1px;height:2px;opacity:.6;"></div>
<div class="tk" style="left:538.22px;top:0;width:1px;height:12px;"></div>
<div class="rl" style="left:540.22px;top:3px;">3600</div>
<div class="tk" style="left:541.93px;top:10px;width:1px;height:2px;opacity:.6;"></div>
<div class="tk" style="left:545.65px;top:10px;width:1px;height:2px;opacity:.6;"></div>
<div class="tk" style="left:549.36px;top:10px;width:1px;height:2px;opacity:.6;"></div>
<div class="tk" style="left:553.07px;top:10px;width:1px;height:2px;opacity:.6;"></div>
<div class="tk" style="left:556.79px;top:8px;width:1px;height:4px;opacity:.6;"></div>
<div class="tk" style="left:560.50px;top:10px;width:1px;height:2px;opacity:.6;"></div>
<div class="tk" style="left:564.21px;top:10px;width:1px;height:2px;opacity:.6;"></div>
<div class="tk" style="left:567.92px;top:10px;width:1px;height:2px;opacity:.6;"></div>
<div class="tk" style="left:571.64px;top:10px;width:1px;height:2px;opacity:.6;"></div>
<div class="tk" style="left:575.35px;top:0;width:1px;height:12px;"></div>
<div class="rl" style="left:577.35px;top:3px;">3700</div>
<div class="tk" style="left:579.06px;top:10px;width:1px;height:2px;opacity:.6;"></div>
<div class="tk" style="left:582.78px;top:10px;width:1px;height:2px;opacity:.6;"></div>
<div class="tk" style="left:586.49px;top:10px;width:1px;height:2px;opacity:.6;"></div>
<div class="tk" style="left:590.20px;top:10px;width:1px;height:2px;opacity:.6;"></div>
<div class="tk" style="left:593.92px;top:8px;width:1px;height:4px;opacity:.6;"></div>
<div class="tk" style="left:597.63px;top:10px;width:1px;height:2px;opacity:.6;"></div>
<div class="tk" style="left:601.34px;top:10px;width:1px;height:2px;opacity:.6;"></div>
<div class="tk" style="left:605.05px;top:10px;width:1px;height:2px;opacity:.6;"></div>
<div class="tk" style="left:608.77px;top:10px;width:1px;height:2px;opacity:.6;"></div>
<div class="tk" style="left:612.48px;top:0;width:1px;height:12px;"></div>
<div class="rl" style="left:614.48px;top:3px;">3800</div>
<div class="tk" style="left:616.19px;top:10px;width:1px;height:2px;opacity:.6;"></div>
<div class="tk" style="left:619.91px;top:10px;width:1px;height:2px;opacity:.6;"></div>
<div class="tk" style="left:623.62px;top:10px;width:1px;height:2px;opacity:.6;"></div>
<div class="tk" style="left:627.33px;top:10px;width:1px;height:2px;opacity:.6;"></div>
<div class="tk" style="left:631.05px;top:8px;width:1px;height:4px;opacity:.6;"></div>
<div class="tk" style="left:634.76px;top:10px;width:1px;height:2px;opacity:.6;"></div>
<div class="tk" style="left:638.47px;top:10px;width:1px;height:2px;opacity:.6;"></div>
<div class="tk" style="left:642.18px;top:10px;width:1px;height:2px;opacity:.6;"></div>
<div class="tk" style="left:645.90px;top:10px;width:1px;height:2px;opacity:.6;"></div>
<div class="tk" style="left:649.61px;top:0;width:1px;height:12px;"></div>
<div class="rl" style="left:651.61px;top:3px;">3900</div>
<div class="tk" style="left:653.32px;top:10px;width:1px;height:2px;opacity:.6;"></div>
</div>
<div class="a" id="rulerv">
<div class="tk" style="left:0;top:-7.83px;width:13px;height:1px;"></div>
<div class="rl" style="left:1.6px;top:-6.63px;">1</div>
<div class="rl" style="left:1.6px;top:0.77px;">0</div>
<div class="rl" style="left:1.6px;top:8.17px;">0</div>
<div class="tk" style="left:11px;top:3.31px;width:2px;height:1px;opacity:.6;"></div>
<div class="tk" style="left:11px;top:7.02px;width:2px;height:1px;opacity:.6;"></div>
<div class="tk" style="left:9px;top:10.74px;width:4px;height:1px;opacity:.6;"></div>
<div class="tk" style="left:11px;top:14.45px;width:2px;height:1px;opacity:.6;"></div>
<div class="tk" style="left:11px;top:18.16px;width:2px;height:1px;opacity:.6;"></div>
<div class="tk" style="left:11px;top:21.87px;width:2px;height:1px;opacity:.6;"></div>
<div class="tk" style="left:11px;top:25.59px;width:2px;height:1px;opacity:.6;"></div>
<div class="tk" style="left:0;top:29.30px;width:13px;height:1px;"></div>
<div class="rl" style="left:1.6px;top:30.50px;">0</div>
<div class="tk" style="left:11px;top:33.01px;width:2px;height:1px;opacity:.6;"></div>
<div class="tk" style="left:11px;top:36.73px;width:2px;height:1px;opacity:.6;"></div>
<div class="tk" style="left:11px;top:40.44px;width:2px;height:1px;opacity:.6;"></div>
<div class="tk" style="left:11px;top:44.15px;width:2px;height:1px;opacity:.6;"></div>
<div class="tk" style="left:9px;top:47.87px;width:4px;height:1px;opacity:.6;"></div>
<div class="tk" style="left:11px;top:51.58px;width:2px;height:1px;opacity:.6;"></div>
<div class="tk" style="left:11px;top:55.29px;width:2px;height:1px;opacity:.6;"></div>
<div class="tk" style="left:11px;top:59.00px;width:2px;height:1px;opacity:.6;"></div>
<div class="tk" style="left:11px;top:62.72px;width:2px;height:1px;opacity:.6;"></div>
<div class="tk" style="left:0;top:66.43px;width:13px;height:1px;"></div>
<div class="rl" style="left:1.6px;top:67.63px;">1</div>
<div class="rl" style="left:1.6px;top:75.03px;">0</div>
<div class="rl" style="left:1.6px;top:82.43px;">0</div>
<div class="tk" style="left:11px;top:70.14px;width:2px;height:1px;opacity:.6;"></div>
<div class="tk" style="left:11px;top:73.86px;width:2px;height:1px;opacity:.6;"></div>
<div class="tk" style="left:11px;top:77.57px;width:2px;height:1px;opacity:.6;"></div>
<div class="tk" style="left:11px;top:81.28px;width:2px;height:1px;opacity:.6;"></div>
<div class="tk" style="left:9px;top:85.00px;width:4px;height:1px;opacity:.6;"></div>
<div class="tk" style="left:11px;top:88.71px;width:2px;height:1px;opacity:.6;"></div>
<div class="tk" style="left:11px;top:92.42px;width:2px;height:1px;opacity:.6;"></div>
<div class="tk" style="left:11px;top:96.13px;width:2px;height:1px;opacity:.6;"></div>
<div class="tk" style="left:11px;top:99.85px;width:2px;height:1px;opacity:.6;"></div>
<div class="tk" style="left:0;top:103.56px;width:13px;height:1px;"></div>
<div class="rl" style="left:1.6px;top:104.76px;">2</div>
<div class="rl" style="left:1.6px;top:112.16px;">0</div>
<div class="rl" style="left:1.6px;top:119.56px;">0</div>
<div class="tk" style="left:11px;top:107.27px;width:2px;height:1px;opacity:.6;"></div>
<div class="tk" style="left:11px;top:110.99px;width:2px;height:1px;opacity:.6;"></div>
<div class="tk" style="left:11px;top:114.70px;width:2px;height:1px;opacity:.6;"></div>
<div class="tk" style="left:11px;top:118.41px;width:2px;height:1px;opacity:.6;"></div>
<div class="tk" style="left:9px;top:122.12px;width:4px;height:1px;opacity:.6;"></div>
<div class="tk" style="left:11px;top:125.84px;width:2px;height:1px;opacity:.6;"></div>
<div class="tk" style="left:11px;top:129.55px;width:2px;height:1px;opacity:.6;"></div>
<div class="tk" style="left:11px;top:133.26px;width:2px;height:1px;opacity:.6;"></div>
<div class="tk" style="left:11px;top:136.98px;width:2px;height:1px;opacity:.6;"></div>
<div class="tk" style="left:0;top:140.69px;width:13px;height:1px;"></div>
<div class="rl" style="left:1.6px;top:141.89px;">3</div>
<div class="rl" style="left:1.6px;top:149.29px;">0</div>
<div class="rl" style="left:1.6px;top:156.69px;">0</div>
<div class="tk" style="left:11px;top:144.40px;width:2px;height:1px;opacity:.6;"></div>
<div class="tk" style="left:11px;top:148.12px;width:2px;height:1px;opacity:.6;"></div>
<div class="tk" style="left:11px;top:151.83px;width:2px;height:1px;opacity:.6;"></div>
<div class="tk" style="left:11px;top:155.54px;width:2px;height:1px;opacity:.6;"></div>
<div class="tk" style="left:9px;top:159.25px;width:4px;height:1px;opacity:.6;"></div>
<div class="tk" style="left:11px;top:162.97px;width:2px;height:1px;opacity:.6;"></div>
<div class="tk" style="left:11px;top:166.68px;width:2px;height:1px;opacity:.6;"></div>
<div class="tk" style="left:11px;top:170.39px;width:2px;height:1px;opacity:.6;"></div>
<div class="tk" style="left:11px;top:174.11px;width:2px;height:1px;opacity:.6;"></div>
<div class="tk" style="left:0;top:177.82px;width:13px;height:1px;"></div>
<div class="rl" style="left:1.6px;top:179.02px;">4</div>
<div class="rl" style="left:1.6px;top:186.42px;">0</div>
<div class="rl" style="left:1.6px;top:193.82px;">0</div>
<div class="tk" style="left:11px;top:181.53px;width:2px;height:1px;opacity:.6;"></div>
<div class="tk" style="left:11px;top:185.25px;width:2px;height:1px;opacity:.6;"></div>
<div class="tk" style="left:11px;top:188.96px;width:2px;height:1px;opacity:.6;"></div>
<div class="tk" style="left:11px;top:192.67px;width:2px;height:1px;opacity:.6;"></div>
<div class="tk" style="left:9px;top:196.38px;width:4px;height:1px;opacity:.6;"></div>
<div class="tk" style="left:11px;top:200.10px;width:2px;height:1px;opacity:.6;"></div>
<div class="tk" style="left:11px;top:203.81px;width:2px;height:1px;opacity:.6;"></div>
<div class="tk" style="left:11px;top:207.52px;width:2px;height:1px;opacity:.6;"></div>
<div class="tk" style="left:11px;top:211.24px;width:2px;height:1px;opacity:.6;"></div>
<div class="tk" style="left:0;top:214.95px;width:13px;height:1px;"></div>
<div class="rl" style="left:1.6px;top:216.15px;">5</div>
<div class="rl" style="left:1.6px;top:223.55px;">0</div>
<div class="rl" style="left:1.6px;top:230.95px;">0</div>
<div class="tk" style="left:11px;top:218.66px;width:2px;height:1px;opacity:.6;"></div>
<div class="tk" style="left:11px;top:222.38px;width:2px;height:1px;opacity:.6;"></div>
<div class="tk" style="left:11px;top:226.09px;width:2px;height:1px;opacity:.6;"></div>
<div class="tk" style="left:11px;top:229.80px;width:2px;height:1px;opacity:.6;"></div>
<div class="tk" style="left:9px;top:233.52px;width:4px;height:1px;opacity:.6;"></div>
<div class="tk" style="left:11px;top:237.23px;width:2px;height:1px;opacity:.6;"></div>
<div class="tk" style="left:11px;top:240.94px;width:2px;height:1px;opacity:.6;"></div>
<div class="tk" style="left:11px;top:244.65px;width:2px;height:1px;opacity:.6;"></div>
<div class="tk" style="left:11px;top:248.37px;width:2px;height:1px;opacity:.6;"></div>
<div class="tk" style="left:0;top:252.08px;width:13px;height:1px;"></div>
<div class="rl" style="left:1.6px;top:253.28px;">6</div>
<div class="rl" style="left:1.6px;top:260.68px;">0</div>
<div class="rl" style="left:1.6px;top:268.08px;">0</div>
<div class="tk" style="left:11px;top:255.79px;width:2px;height:1px;opacity:.6;"></div>
<div class="tk" style="left:11px;top:259.51px;width:2px;height:1px;opacity:.6;"></div>
<div class="tk" style="left:11px;top:263.22px;width:2px;height:1px;opacity:.6;"></div>
<div class="tk" style="left:11px;top:266.93px;width:2px;height:1px;opacity:.6;"></div>
<div class="tk" style="left:9px;top:270.65px;width:4px;height:1px;opacity:.6;"></div>
<div class="tk" style="left:11px;top:274.36px;width:2px;height:1px;opacity:.6;"></div>
<div class="tk" style="left:11px;top:278.07px;width:2px;height:1px;opacity:.6;"></div>
<div class="tk" style="left:11px;top:281.78px;width:2px;height:1px;opacity:.6;"></div>
<div class="tk" style="left:11px;top:285.50px;width:2px;height:1px;opacity:.6;"></div>
<div class="tk" style="left:0;top:289.21px;width:13px;height:1px;"></div>
<div class="rl" style="left:1.6px;top:290.41px;">7</div>
<div class="rl" style="left:1.6px;top:297.81px;">0</div>
<div class="rl" style="left:1.6px;top:305.21px;">0</div>
<div class="tk" style="left:11px;top:292.92px;width:2px;height:1px;opacity:.6;"></div>
<div class="tk" style="left:11px;top:296.64px;width:2px;height:1px;opacity:.6;"></div>
<div class="tk" style="left:11px;top:300.35px;width:2px;height:1px;opacity:.6;"></div>
<div class="tk" style="left:11px;top:304.06px;width:2px;height:1px;opacity:.6;"></div>
<div class="tk" style="left:9px;top:307.78px;width:4px;height:1px;opacity:.6;"></div>
<div class="tk" style="left:11px;top:311.49px;width:2px;height:1px;opacity:.6;"></div>
<div class="tk" style="left:11px;top:315.20px;width:2px;height:1px;opacity:.6;"></div>
<div class="tk" style="left:11px;top:318.91px;width:2px;height:1px;opacity:.6;"></div>
<div class="tk" style="left:11px;top:322.63px;width:2px;height:1px;opacity:.6;"></div>
<div class="tk" style="left:0;top:326.34px;width:13px;height:1px;"></div>
<div class="rl" style="left:1.6px;top:327.54px;">8</div>
<div class="rl" style="left:1.6px;top:334.94px;">0</div>
<div class="rl" style="left:1.6px;top:342.34px;">0</div>
<div class="tk" style="left:11px;top:330.05px;width:2px;height:1px;opacity:.6;"></div>
<div class="tk" style="left:11px;top:333.77px;width:2px;height:1px;opacity:.6;"></div>
<div class="tk" style="left:11px;top:337.48px;width:2px;height:1px;opacity:.6;"></div>
<div class="tk" style="left:11px;top:341.19px;width:2px;height:1px;opacity:.6;"></div>
<div class="tk" style="left:9px;top:344.91px;width:4px;height:1px;opacity:.6;"></div>
<div class="tk" style="left:11px;top:348.62px;width:2px;height:1px;opacity:.6;"></div>
<div class="tk" style="left:11px;top:352.33px;width:2px;height:1px;opacity:.6;"></div>
<div class="tk" style="left:11px;top:356.04px;width:2px;height:1px;opacity:.6;"></div>
<div class="tk" style="left:11px;top:359.76px;width:2px;height:1px;opacity:.6;"></div>
<div class="tk" style="left:0;top:363.47px;width:13px;height:1px;"></div>
<div class="rl" style="left:1.6px;top:364.67px;">9</div>
<div class="rl" style="left:1.6px;top:372.07px;">0</div>
<div class="rl" style="left:1.6px;top:379.47px;">0</div>
<div class="tk" style="left:11px;top:367.18px;width:2px;height:1px;opacity:.6;"></div>
<div class="tk" style="left:11px;top:370.90px;width:2px;height:1px;opacity:.6;"></div>
<div class="tk" style="left:11px;top:374.61px;width:2px;height:1px;opacity:.6;"></div>
<div class="tk" style="left:11px;top:378.32px;width:2px;height:1px;opacity:.6;"></div>
<div class="tk" style="left:9px;top:382.04px;width:4px;height:1px;opacity:.6;"></div>
<div class="tk" style="left:11px;top:385.75px;width:2px;height:1px;opacity:.6;"></div>
<div class="tk" style="left:11px;top:389.46px;width:2px;height:1px;opacity:.6;"></div>
<div class="tk" style="left:11px;top:393.17px;width:2px;height:1px;opacity:.6;"></div>
<div class="tk" style="left:11px;top:396.89px;width:2px;height:1px;opacity:.6;"></div>
<div class="tk" style="left:0;top:400.60px;width:13px;height:1px;"></div>
<div class="rl" style="left:1.6px;top:401.80px;">1</div>
<div class="rl" style="left:1.6px;top:409.20px;">0</div>
<div class="rl" style="left:1.6px;top:416.60px;">0</div>
<div class="rl" style="left:1.6px;top:424.00px;">0</div>
<div class="tk" style="left:11px;top:404.31px;width:2px;height:1px;opacity:.6;"></div>
<div class="tk" style="left:11px;top:408.03px;width:2px;height:1px;opacity:.6;"></div>
<div class="tk" style="left:11px;top:411.74px;width:2px;height:1px;opacity:.6;"></div>
<div class="tk" style="left:11px;top:415.45px;width:2px;height:1px;opacity:.6;"></div>
<div class="tk" style="left:9px;top:419.17px;width:4px;height:1px;opacity:.6;"></div>
<div class="tk" style="left:11px;top:422.88px;width:2px;height:1px;opacity:.6;"></div>
<div class="tk" style="left:11px;top:426.59px;width:2px;height:1px;opacity:.6;"></div>
<div class="tk" style="left:11px;top:430.30px;width:2px;height:1px;opacity:.6;"></div>
<div class="tk" style="left:11px;top:434.02px;width:2px;height:1px;opacity:.6;"></div>
<div class="tk" style="left:0;top:437.73px;width:13px;height:1px;"></div>
<div class="rl" style="left:1.6px;top:438.93px;">1</div>
<div class="rl" style="left:1.6px;top:446.33px;">1</div>
<div class="rl" style="left:1.6px;top:453.73px;">0</div>
<div class="rl" style="left:1.6px;top:461.13px;">0</div>
<div class="tk" style="left:11px;top:441.44px;width:2px;height:1px;opacity:.6;"></div>
<div class="tk" style="left:11px;top:445.16px;width:2px;height:1px;opacity:.6;"></div>
<div class="tk" style="left:11px;top:448.87px;width:2px;height:1px;opacity:.6;"></div>
<div class="tk" style="left:11px;top:452.58px;width:2px;height:1px;opacity:.6;"></div>
<div class="tk" style="left:9px;top:456.30px;width:4px;height:1px;opacity:.6;"></div>
<div class="tk" style="left:11px;top:460.01px;width:2px;height:1px;opacity:.6;"></div>
<div class="tk" style="left:11px;top:463.72px;width:2px;height:1px;opacity:.6;"></div>
<div class="tk" style="left:11px;top:467.43px;width:2px;height:1px;opacity:.6;"></div>
<div class="tk" style="left:11px;top:471.15px;width:2px;height:1px;opacity:.6;"></div>
<div class="tk" style="left:0;top:474.86px;width:13px;height:1px;"></div>
<div class="rl" style="left:1.6px;top:476.06px;">1</div>
<div class="rl" style="left:1.6px;top:483.46px;">2</div>
<div class="rl" style="left:1.6px;top:490.86px;">0</div>
<div class="rl" style="left:1.6px;top:498.26px;">0</div>
<div class="tk" style="left:11px;top:478.57px;width:2px;height:1px;opacity:.6;"></div>
<div class="tk" style="left:11px;top:482.29px;width:2px;height:1px;opacity:.6;"></div>
<div class="tk" style="left:11px;top:486.00px;width:2px;height:1px;opacity:.6;"></div>
<div class="tk" style="left:11px;top:489.71px;width:2px;height:1px;opacity:.6;"></div>
<div class="tk" style="left:9px;top:493.43px;width:4px;height:1px;opacity:.6;"></div>
<div class="tk" style="left:11px;top:497.14px;width:2px;height:1px;opacity:.6;"></div>
<div class="tk" style="left:11px;top:500.85px;width:2px;height:1px;opacity:.6;"></div>
<div class="tk" style="left:11px;top:504.56px;width:2px;height:1px;opacity:.6;"></div>
<div class="tk" style="left:11px;top:508.28px;width:2px;height:1px;opacity:.6;"></div>
<div class="tk" style="left:0;top:511.99px;width:13px;height:1px;"></div>
<div class="rl" style="left:1.6px;top:513.19px;">1</div>
<div class="rl" style="left:1.6px;top:520.59px;">3</div>
<div class="rl" style="left:1.6px;top:527.99px;">0</div>
<div class="rl" style="left:1.6px;top:535.39px;">0</div>
<div class="tk" style="left:11px;top:515.70px;width:2px;height:1px;opacity:.6;"></div>
<div class="tk" style="left:11px;top:519.42px;width:2px;height:1px;opacity:.6;"></div>
<div class="tk" style="left:11px;top:523.13px;width:2px;height:1px;opacity:.6;"></div>
<div class="tk" style="left:11px;top:526.84px;width:2px;height:1px;opacity:.6;"></div>
<div class="tk" style="left:9px;top:530.56px;width:4px;height:1px;opacity:.6;"></div>
<div class="tk" style="left:11px;top:534.27px;width:2px;height:1px;opacity:.6;"></div>
<div class="tk" style="left:11px;top:537.98px;width:2px;height:1px;opacity:.6;"></div>
<div class="tk" style="left:11px;top:541.69px;width:2px;height:1px;opacity:.6;"></div>
<div class="tk" style="left:11px;top:545.41px;width:2px;height:1px;opacity:.6;"></div>
<div class="tk" style="left:0;top:549.12px;width:13px;height:1px;"></div>
<div class="rl" style="left:1.6px;top:550.32px;">1</div>
<div class="rl" style="left:1.6px;top:557.72px;">4</div>
<div class="rl" style="left:1.6px;top:565.12px;">0</div>
<div class="rl" style="left:1.6px;top:572.52px;">0</div>
<div class="tk" style="left:11px;top:552.83px;width:2px;height:1px;opacity:.6;"></div>
</div>
<!-- TOOLS PANEL -->
<div class="a" id="tools">
  <div class="a" style="left:0;top:0;width:54px;height:9px;background:#424242;"></div>
  <svg width="7" height="5" viewBox="0 0 7 5" style="left:4px;top:2.5px;"><path d="M3,0.3 L0.8,2.5 L3,4.7 M6.2,0.3 L4,2.5 L6.2,4.7" fill="none" stroke="#d0d0d0" stroke-width="1"/></svg>
  <div class="a" style="left:19px;top:12px;width:15px;height:3px;background:repeating-linear-gradient(to right,#424242 0,#424242 1px,transparent 1px,transparent 3px);"></div>
  <!-- move (selected) -->
  <div class="a" style="left:3px;top:22px;width:23px;height:18px;background:#383838;border:1px solid #2f2f2f;box-sizing:border-box;border-radius:2px;"></div>
  <svg width="13" height="13" viewBox="0 0 14 14" style="left:8px;top:24.5px;"><g fill="none" stroke="#f0f0f0" stroke-width="1.3"><path d="M7,1.2 V12.8 M1.2,7 H12.8"/><path d="M5,3.2 L7,1 L9,3.2 M5,10.8 L7,13 L9,10.8 M3.2,5 L1,7 L3.2,9 M10.8,5 L13,7 L10.8,9"/></g></svg>
  <svg width="3" height="3" viewBox="0 0 3 3" style="left:22px;top:36px;"><path d="M3,0 V3 H0 Z" fill="#d0d0d0"/></svg>
  <!-- marquee -->
  <div class="a" style="left:33px;top:26px;width:13px;height:10px;border:1.2px dashed #d0d0d0;box-sizing:border-box;border-radius:1px;"></div>
  <svg width="3" height="3" viewBox="0 0 3 3" style="left:46px;top:36px;"><path d="M3,0 V3 H0 Z" fill="#c0c0c0"/></svg>
  <!-- lasso -->
  <svg width="14" height="12" viewBox="0 0 14 12" style="left:9.5px;top:45px;"><ellipse cx="7" cy="4.5" rx="5.6" ry="3.6" fill="none" stroke="#d0d0d0" stroke-width="1.1" transform="rotate(-12 7 4.5)"/><path d="M3.2,7.2 C2.4,8.6 3.4,9.6 3,11.2" fill="none" stroke="#d0d0d0" stroke-width="1"/></svg>
  <svg width="3" height="3" viewBox="0 0 3 3" style="left:22px;top:55px;"><path d="M3,0 V3 H0 Z" fill="#c0c0c0"/></svg>
  <!-- quick select -->
  <svg width="15" height="12" viewBox="0 0 15 12" style="left:32.5px;top:45.5px;"><path d="M8,1 H2 Q0.6,1 0.6,2.4 V9.2 Q0.6,10.6 2,10.6 H5" fill="none" stroke="#c8c8c8" stroke-width="1" stroke-dasharray="1.8 1.2"/><path d="M14,0.2 L9.6,4.6 L11,6 Z" fill="#e6e6e6"/><path d="M9.2,5 C7.4,5.4 7.6,8 5.8,9.6 C8.4,10 10.8,8.8 10.8,6.6 Z" fill="#e6e6e6"/></svg>
  <svg width="3" height="3" viewBox="0 0 3 3" style="left:46px;top:55px;"><path d="M3,0 V3 H0 Z" fill="#c0c0c0"/></svg>
</div>
<div class="a" style="left:54px;top:48px;width:1px;height:583px;background:#3a3a3a;"></div>
<div class="a" style="left:0;top:48px;width:1px;height:583px;background:#3e3e3e;"></div>

<!-- V SCROLLBAR -->
<div class="a" id="vscroll">
  <svg width="6" height="4" viewBox="0 0 6 4" style="left:3.5px;top:5.5px;"><path d="M0.5,3.3 L3,0.8 L5.5,3.3" fill="none" stroke="#9a9a9a" stroke-width="0.9"/></svg>
  <div class="a" style="left:1px;top:210px;width:11px;height:234px;background:#696969;"></div>
</div>
<div class="a" style="left:722px;top:48px;width:2px;height:583px;background:#3a3a3a;"></div>

<!-- RIGHT PANEL STRIP -->
<div class="a" id="rpanel">
  <div class="a" style="left:0;top:0;width:26px;height:8px;background:#424242;"></div>
  <svg width="7" height="5" viewBox="0 0 7 5" style="left:17px;top:1.5px;"><path d="M3,0.3 L0.8,2.5 L3,4.7 M6.2,0.3 L4,2.5 L6.2,4.7" fill="none" stroke="#d0d0d0" stroke-width="1"/></svg>
  <div class="a" style="left:7px;top:11px;width:14px;height:2px;background:repeating-linear-gradient(to right,#424242 0,#424242 1px,transparent 1px,transparent 3px);"></div>
  <!-- history icon -->
  <svg width="16" height="14" viewBox="0 0 16 14" style="left:9px;top:19px;"><g fill="none" stroke="#dcdcdc" stroke-width="0.9"><rect x="0.5" y="0.8" width="3.2" height="3.2"/><rect x="0.5" y="5.2" width="3.2" height="3.2"/></g><rect x="0.2" y="9.4" width="3.8" height="3.6" fill="#dcdcdc"/><path d="M7,4.5 C11,2.5 13.5,6 11.5,9.5 C10.8,11 9.5,12 8.5,12.4" fill="none" stroke="#dcdcdc" stroke-width="1.4"/><path d="M6,4.8 L9.6,1.4 L10,5.8 Z" fill="#dcdcdc"/></svg>
  <div class="a" style="left:0;top:38px;width:26px;height:1px;background:#3c3c3c;"></div>
</div>

<!-- LAYERS PANEL -->
<div class="a" id="layers">
  <!-- header strip -->
  <div class="a" style="left:0;top:0;width:180px;height:10px;background:#424242;"></div>
  <svg width="7" height="5" viewBox="0 0 7 5" style="left:157px;top:3.5px;"><path d="M3,0.3 L0.8,2.5 L3,4.7 M6.2,0.3 L4,2.5 L6.2,4.7" fill="none" stroke="#d0d0d0" stroke-width="1"/></svg>
  <svg width="5" height="5" viewBox="0 0 5 5" style="left:171.5px;top:3.5px;"><path d="M0.5,0.5 L4.5,4.5 M4.5,0.5 L0.5,4.5" stroke="#d0d0d0" stroke-width="1.1"/></svg>
  <!-- tab row -->
  <div class="a" style="left:0;top:10px;width:180px;height:21px;background:#424242;"></div>
  <div class="a" style="left:0;top:10px;width:30px;height:21px;background:#535353;"></div>
  <div class="t" id="ltab" style="left:4.5px;top:16px;font-size:9.4px;letter-spacing:-0.2px;color:#e6e6e6;">图层</div>
  <div class="a" style="left:168px;top:18px;width:8px;height:1.3px;background:#c8c8c8;"></div>
  <div class="a" style="left:168px;top:20.7px;width:8px;height:1.3px;background:#c8c8c8;"></div>
  <div class="a" style="left:168px;top:23.4px;width:8px;height:1.3px;background:#c8c8c8;"></div>

  <!-- filter row -->
  <div class="a" style="left:1px;top:38px;width:64px;height:15px;background:#454545;border:1px solid #3d3d3d;box-sizing:border-box;border-radius:2px;"></div>
  <svg width="8" height="8" viewBox="0 0 8 8" style="left:6.5px;top:42px;"><circle cx="4.8" cy="3.2" r="2.5" fill="none" stroke="#dcdcdc" stroke-width="1"/><path d="M3,5 L0.6,7.4" stroke="#dcdcdc" stroke-width="1.2"/></svg>
  <div class="t" id="lty" style="letter-spacing:-0.3px;left:17.5px;top:41px;font-size:9.2px;color:#e0e0e0;">类型</div>
  <svg width="6" height="4" viewBox="0 0 6 4" style="left:56.5px;top:44.5px;"><path d="M0.5,0.5 L3,3 L5.5,0.5" fill="none" stroke="#c0c0c0" stroke-width="0.9"/></svg>
  <!-- filter icons -->
  <svg width="10" height="8" viewBox="0 0 10 8" style="left:77px;top:41px;"><rect x="0.5" y="0.5" width="8.6" height="7" fill="none" stroke="#dcdcdc" stroke-width="1"/><path d="M1.8,6.2 L3.6,3.6 L5,5.2 L6.4,3.2 L7.8,6.2 Z" fill="#dcdcdc"/></svg>
  <svg width="10" height="10" viewBox="0 0 10 10" style="left:95px;top:40px;"><circle cx="5" cy="5" r="4" fill="none" stroke="#dcdcdc" stroke-width="1"/><path d="M2.2,7.8 A4,4 0 0 1 7.8,2.2 Z" fill="#dcdcdc"/></svg>
  <div class="t" style="left:114px;top:39.5px;font-size:10.5px;font-weight:bold;font-family:'Liberation Serif',serif;color:#e0e0e0;">T</div>
  <svg width="10" height="9" viewBox="0 0 10 9" style="left:131px;top:40.5px;"><rect x="1.5" y="1.5" width="7" height="6" fill="none" stroke="#dcdcdc" stroke-width="1"/><g fill="#dcdcdc"><rect x="0" y="0" width="2.4" height="2.4"/><rect x="7.6" y="0" width="2.4" height="2.4"/><rect x="0" y="6.6" width="2.4" height="2.4"/><rect x="7.6" y="6.6" width="2.4" height="2.4"/></g></svg>
  <svg width="9" height="10" viewBox="0 0 9 10" style="left:150px;top:40.5px;"><path d="M3,0.5 H6.2 L8.5,2.8 V8 H3 Z" fill="none" stroke="#dcdcdc" stroke-width="0.9"/><rect x="0.3" y="4" width="4.6" height="5.6" fill="#dcdcdc"/></svg>
  <div class="a" style="left:170px;top:37px;width:7px;height:14.5px;border:1px solid #3a3a3a;border-radius:3.5px;box-sizing:border-box;background:#4a4a4a;"></div>
  <div class="a" style="left:170px;top:37px;width:7px;height:7px;border-radius:50%;background:#ececec;"></div>

  <div class="a" style="left:0;top:54px;width:180px;height:1px;background:#484848;"></div>
  <!-- blend row -->
  <div class="a" style="left:1px;top:59px;width:87px;height:15px;border:1px solid #474747;box-sizing:border-box;border-radius:2px;background:#4e4e4e;"></div>
  <div class="t" id="lno" style="letter-spacing:-0.3px;left:8px;top:62.5px;font-size:9.2px;color:#8d8d8d;">正常</div>
  <svg width="6" height="4" viewBox="0 0 6 4" style="left:79.5px;top:65.5px;"><path d="M0.5,0.5 L3,3 L5.5,0.5" fill="none" stroke="#6a6a6a" stroke-width="0.9"/></svg>
  <div class="t" id="lop" style="letter-spacing:-0.3px;left:93.5px;top:62.5px;font-size:9.2px;color:#8d8d8d;">不透明度:</div>
  <div class="a" style="left:135.5px;top:58.6px;width:42px;height:14.4px;border:1px solid #474747;box-sizing:border-box;border-radius:2px;background:#4e4e4e;"></div>
  <div class="a" style="left:165px;top:58.6px;width:1px;height:14.4px;background:#474747;"></div>
  <div class="t" style="left:139px;top:61.8px;font-size:8.4px;color:#777;">100%</div>
  <svg width="6" height="4" viewBox="0 0 6 4" style="left:168.5px;top:65.5px;"><path d="M0.5,0.5 L3,3 L5.5,0.5" fill="none" stroke="#6a6a6a" stroke-width="0.9"/></svg>
  <div class="a" style="left:0;top:76px;width:180px;height:1px;background:#484848;"></div>
  <!-- lock row -->
  <div class="t" id="llk" style="letter-spacing:-0.3px;left:3px;top:81.7px;font-size:9.2px;color:#8d8d8d;">锁定:</div>
  <svg width="9" height="9" viewBox="0 0 9 9" style="left:30px;top:81.7px;"><rect x="0.5" y="0.5" width="8" height="8" fill="none" stroke="#a0a0a0" stroke-width="0.9"/><g fill="#a0a0a0"><rect x="1" y="1" width="2.3" height="2.3"/><rect x="5.6" y="1" width="2.3" height="2.3"/><rect x="3.3" y="3.3" width="2.3" height="2.3"/><rect x="1" y="5.6" width="2.3" height="2.3"/><rect x="5.6" y="5.6" width="2.3" height="2.3"/></g></svg>
  <svg width="10" height="10" viewBox="0 0 10 10" style="left:46.5px;top:81.2px;"><path d="M9.6,0.2 L3.8,5.2 L5.4,6.8 Z" fill="#a0a0a0"/><path d="M3.4,5.6 C1.8,6 2.4,8 0.6,9.2 C3,9.8 5.6,8.8 5.4,7 Z" fill="#a0a0a0"/></svg>
  <svg width="10" height="10" viewBox="0 0 14 14" style="left:62.5px;top:81.2px;"><g fill="none" stroke="#a0a0a0" stroke-width="1.3"><path d="M7,1.2 V12.8 M1.2,7 H12.8"/><path d="M5,3.2 L7,1 L9,3.2 M5,10.8 L7,13 L9,10.8 M3.2,5 L1,7 L3.2,9 M10.8,5 L13,7 L10.8,9"/></g></svg>
  <svg width="10" height="10" viewBox="0 0 10 10" style="left:79px;top:81.7px;"><g fill="none" stroke="#a0a0a0" stroke-width="1"><path d="M2.2,0 V7.6 H10 M0,2.2 H7.6 V10"/><path d="M7.6,2.2 L9.6,0.2" stroke-width="0.8"/></g></svg>
  <svg width="8" height="9" viewBox="0 0 8 9" style="left:96px;top:81.7px;"><rect x="0.3" y="3.8" width="7.4" height="5" fill="#a0a0a0"/><path d="M1.8,4 V2.6 C1.8,0.2 6.2,0.2 6.2,2.6 V4" fill="none" stroke="#a0a0a0" stroke-width="1.1"/></svg>
  <div class="t" id="lfi" style="letter-spacing:-0.3px;left:112px;top:81.7px;font-size:9.2px;color:#8d8d8d;">填充:</div>
  <div class="a" style="left:135.5px;top:79.6px;width:42px;height:13.8px;border:1px solid #474747;box-sizing:border-box;border-radius:2px;background:#4e4e4e;"></div>
  <div class="a" style="left:165px;top:79.6px;width:1px;height:13.8px;background:#474747;"></div>
  <div class="t" style="left:139px;top:82.2px;font-size:8.4px;color:#777;">100%</div>
  <svg width="6" height="4" viewBox="0 0 6 4" style="left:168.5px;top:85.2px;"><path d="M0.5,0.5 L3,3 L5.5,0.5" fill="none" stroke="#6a6a6a" stroke-width="0.9"/></svg>

  <!-- list background -->
  <div class="a" style="left:0;top:98px;width:180px;height:211px;background:#484848;"></div>
  <!-- scrollbar -->
  <div class="a" style="left:168.5px;top:98px;width:11.5px;height:211px;background:#4a4a4a;"></div>
  <svg width="6" height="4" viewBox="0 0 6 4" style="left:171.5px;top:103.5px;"><path d="M0.5,3.3 L3,0.8 L5.5,3.3" fill="none" stroke="#b0b0b0" stroke-width="0.9"/></svg>
  <div class="a" style="left:169.5px;top:111px;width:9px;height:97px;background:#696969;"></div>
  <svg width="6" height="4" viewBox="0 0 6 4" style="left:171.5px;top:300px;"><path d="M0.5,0.7 L3,3.2 L5.5,0.7" fill="none" stroke="#9a9a9a" stroke-width="0.9"/></svg>

  <div class="row dk" style="top:98px;height:19.8px;"></div>
<svg width="10" height="6" viewBox="0 0 10 6" style="left:4.5px;top:106.4px;"><path d="M0,3 C2,-0.6 8,-0.6 10,3 C8,6.6 2,6.6 0,3 Z" fill="#e8e8e8"/><circle cx="5" cy="3" r="1.9" fill="#3c3c3c"/><circle cx="4.4" cy="2.4" r="0.6" fill="#e8e8e8"/></svg>
<svg width="4" height="8" viewBox="0 0 4 8" style="left:24px;top:104.80000000000001px;"><path d="M0.6,0.6 L3.4,4 L0.6,7.4" fill="none" stroke="#b8b8b8" stroke-width="0.9"/></svg>
<div class="t" style="left:36.7px;top:105.6px;font-size:8.8px;color:#ececec;font-weight:bold;">Article</div>
<div class="row dk" style="top:118px;height:19.8px;"></div>
<svg width="10" height="6" viewBox="0 0 10 6" style="left:4.5px;top:126.4px;"><path d="M0,3 C2,-0.6 8,-0.6 10,3 C8,6.6 2,6.6 0,3 Z" fill="#e8e8e8"/><circle cx="5" cy="3" r="1.9" fill="#3c3c3c"/><circle cx="4.4" cy="2.4" r="0.6" fill="#e8e8e8"/></svg>
<svg width="4" height="8" viewBox="0 0 4 8" style="left:24px;top:124.80000000000001px;"><path d="M0.6,0.6 L3.4,4 L0.6,7.4" fill="none" stroke="#b8b8b8" stroke-width="0.9"/></svg>
<div class="t" style="left:36.7px;top:125.6px;font-size:8.8px;color:#ececec;font-weight:bold;">Messages</div>
<div class="row dk" style="top:138px;height:19.7px;"></div>
<svg width="10" height="6" viewBox="0 0 10 6" style="left:4.5px;top:146.3px;"><path d="M0,3 C2,-0.6 8,-0.6 10,3 C8,6.6 2,6.6 0,3 Z" fill="#e8e8e8"/><circle cx="5" cy="3" r="1.9" fill="#3c3c3c"/><circle cx="4.4" cy="2.4" r="0.6" fill="#e8e8e8"/></svg>
<svg width="7" height="4" viewBox="0 0 7 4" style="left:22.5px;top:146.75px;"><path d="M0.5,0.5 L3.5,3.5 L6.5,0.5" fill="none" stroke="#b8b8b8" stroke-width="0.9"/></svg>
<div class="t" style="left:36.7px;top:145.6px;font-size:8.8px;color:#ececec;font-weight:bold;">Profile</div>
<div class="row" style="top:158px;height:17.5px;"></div>
<div class="a" style="left:20px;top:158px;width:1px;height:17.5px;background:#484848;"></div>
<svg width="10" height="6" viewBox="0 0 10 6" style="left:4.5px;top:165.2px;"><path d="M0,3 C2,-0.6 8,-0.6 10,3 C8,6.6 2,6.6 0,3 Z" fill="#e8e8e8"/><circle cx="5" cy="3" r="1.9" fill="#3c3c3c"/><circle cx="4.4" cy="2.4" r="0.6" fill="#e8e8e8"/></svg>
<svg width="7" height="4" viewBox="0 0 7 4" style="left:35px;top:165.65px;"><path d="M0.5,0.5 L3.5,3.5 L6.5,0.5" fill="none" stroke="#b8b8b8" stroke-width="0.9"/></svg>
<svg width="11" height="9" viewBox="0 0 11 9" style="left:44px;top:162.65px;"><path d="M0,0.5 H4 L5,1.8 H10.4 V3.2 H0 Z" fill="none" stroke="#e4e4e4" stroke-width="0.9"/><rect x="0" y="3.6" width="10.6" height="5" fill="#e4e4e4"/></svg>
<div class="t" style="left:63.3px;top:164.5px;font-size:8.8px;color:#ececec;">Profile</div>
<div class="row" style="top:176px;height:18px;"></div>
<div class="a" style="left:20px;top:176px;width:1px;height:18px;background:#484848;"></div>
<svg width="10" height="6" viewBox="0 0 10 6" style="left:4.5px;top:183.5px;"><path d="M0,3 C2,-0.6 8,-0.6 10,3 C8,6.6 2,6.6 0,3 Z" fill="#e8e8e8"/><circle cx="5" cy="3" r="1.9" fill="#3c3c3c"/><circle cx="4.4" cy="2.4" r="0.6" fill="#e8e8e8"/></svg>
<svg width="7" height="4" viewBox="0 0 7 4" style="left:46.5px;top:183.9px;"><path d="M0.5,0.5 L3.5,3.5 L6.5,0.5" fill="none" stroke="#b8b8b8" stroke-width="0.9"/></svg>
<svg width="11" height="9" viewBox="0 0 11 9" style="left:55.7px;top:180.9px;"><path d="M0,0.5 H4 L5,1.8 H10.4 V3.2 H0 Z" fill="none" stroke="#e4e4e4" stroke-width="0.9"/><rect x="0" y="3.6" width="10.6" height="5" fill="#e4e4e4"/></svg>
<div class="t" style="left:75.3px;top:182.7px;font-size:8.8px;color:#ececec;">Main</div>
<div class="row" style="top:195px;height:17.5px;"></div>
<div class="a" style="left:20px;top:195px;width:1px;height:17.5px;background:#484848;"></div>
<svg width="10" height="6" viewBox="0 0 10 6" style="left:4.5px;top:202.2px;"><path d="M0,3 C2,-0.6 8,-0.6 10,3 C8,6.6 2,6.6 0,3 Z" fill="#e8e8e8"/><circle cx="5" cy="3" r="1.9" fill="#3c3c3c"/><circle cx="4.4" cy="2.4" r="0.6" fill="#e8e8e8"/></svg>
<svg width="4" height="8" viewBox="0 0 4 8" style="left:59.5px;top:200.65px;"><path d="M0.6,0.6 L3.4,4 L0.6,7.4" fill="none" stroke="#b8b8b8" stroke-width="0.9"/></svg>
<svg width="11" height="9" viewBox="0 0 11 9" style="left:67.7px;top:199.65px;"><path d="M0,0 H4 L5,1.4 H10.6 V8.8 H0 Z" fill="#e4e4e4"/></svg>
<div class="t" style="left:87.3px;top:201.5px;font-size:8.8px;color:#ececec;">Content</div>
<div class="row" style="top:213.5px;height:17.5px;"></div>
<div class="a" style="left:20px;top:213.5px;width:1px;height:17.5px;background:#484848;"></div>
<svg width="10" height="6" viewBox="0 0 10 6" style="left:4.5px;top:220.8px;"><path d="M0,3 C2,-0.6 8,-0.6 10,3 C8,6.6 2,6.6 0,3 Z" fill="#e8e8e8"/><circle cx="5" cy="3" r="1.9" fill="#3c3c3c"/><circle cx="4.4" cy="2.4" r="0.6" fill="#e8e8e8"/></svg>
<svg width="7" height="4" viewBox="0 0 7 4" style="left:58.2px;top:221.15px;"><path d="M0.5,0.5 L3.5,3.5 L6.5,0.5" fill="none" stroke="#b8b8b8" stroke-width="0.9"/></svg>
<svg width="11" height="9" viewBox="0 0 11 9" style="left:67.7px;top:218.15px;"><path d="M0,0.5 H4 L5,1.8 H10.4 V3.2 H0 Z" fill="none" stroke="#e4e4e4" stroke-width="0.9"/><rect x="0" y="3.6" width="10.6" height="5" fill="#e4e4e4"/></svg>
<div class="t" style="left:87.3px;top:220.0px;font-size:8.8px;color:#ececec;">Photo</div>
<div class="row" style="top:232px;height:18px;"></div>
<div class="a" style="left:20px;top:232px;width:1px;height:18px;background:#484848;"></div>
<svg width="10" height="6" viewBox="0 0 10 6" style="left:4.5px;top:239.5px;"><path d="M0,3 C2,-0.6 8,-0.6 10,3 C8,6.6 2,6.6 0,3 Z" fill="#e8e8e8"/><circle cx="5" cy="3" r="1.9" fill="#3c3c3c"/><circle cx="4.4" cy="2.4" r="0.6" fill="#e8e8e8"/></svg>
<svg width="7" height="4" viewBox="0 0 7 4" style="left:70px;top:239.9px;"><path d="M0.5,0.5 L3.5,3.5 L6.5,0.5" fill="none" stroke="#b8b8b8" stroke-width="0.9"/></svg>
<svg width="11" height="9" viewBox="0 0 11 9" style="left:79.3px;top:236.9px;"><path d="M0,0.5 H4 L5,1.8 H10.4 V3.2 H0 Z" fill="none" stroke="#e4e4e4" stroke-width="0.9"/><rect x="0" y="3.6" width="10.6" height="5" fill="#e4e4e4"/></svg>
<div class="t" style="left:98.7px;top:238.7px;font-size:8.8px;color:#ececec;">Star</div>
<div class="row" style="top:251px;height:30.3px;"></div>
<div class="a" style="left:20px;top:251px;width:1px;height:30.3px;background:#484848;"></div>
<div class="a" style="left:4.5px;top:262.5px;width:9.5px;height:9.5px;border:1px solid #5e5e5e;box-sizing:border-box;background:#555;"></div>
<div class="a" style="left:82.3px;top:254.3px;width:14.5px;height:24px;border:1px solid #2e2a28;box-sizing:border-box;border-radius:1.5px;background-color:#fdfdfd;background-image:linear-gradient(45deg,#c9cfd0 25%,transparent 25%,transparent 75%,#c9cfd0 75%),linear-gradient(45deg,#c9cfd0 25%,transparent 25%,transparent 75%,#c9cfd0 75%);background-size:6px 6px;background-position:0 0,3px 3px;"></div><div class="a" style="left:85.3px;top:267.8px;width:10.5px;height:9.5px;background:#f6f6f6;border-left:1.2px solid #4a4a4a;border-top:1.2px solid #4a4a4a;box-sizing:border-box;"></div><svg width="8" height="7" viewBox="0 0 8 7" style="left:87.6px;top:270.1px;"><rect x="0.9" y="0.9" width="6.2" height="5.2" fill="#e2e2e2" stroke="#5a5a5a" stroke-width="0.8"/><g fill="#5a5a5a"><rect x="0" y="0" width="1.6" height="1.6"/><rect x="6.4" y="0" width="1.6" height="1.6"/><rect x="0" y="5.4" width="1.6" height="1.6"/><rect x="6.4" y="5.4" width="1.6" height="1.6"/></g></svg>
<div class="t" style="left:103.3px;top:263.8px;font-size:8.8px;color:#ececec;">-e-Star</div>
<div class="row" style="top:282px;height:30.3px;"></div>
<div class="a" style="left:20px;top:282px;width:1px;height:30.3px;background:#484848;"></div>
<div class="a" style="left:4.5px;top:293.5px;width:9.5px;height:9.5px;border:1px solid #5e5e5e;box-sizing:border-box;background:#555;"></div>
<div class="a" style="left:82.3px;top:286px;width:14.5px;height:24px;border:1px solid #2e2a28;box-sizing:border-box;border-radius:1.5px;background-color:#fdfdfd;background-image:linear-gradient(45deg,#c9cfd0 25%,transparent 25%,transparent 75%,#c9cfd0 75%),linear-gradient(45deg,#c9cfd0 25%,transparent 25%,transparent 75%,#c9cfd0 75%);background-size:6px 6px;background-position:0 0,3px 3px;"></div><div class="a" style="left:85.3px;top:299.5px;width:10.5px;height:9.5px;background:#f6f6f6;border-left:1.2px solid #4a4a4a;border-top:1.2px solid #4a4a4a;box-sizing:border-box;"></div><svg width="8" height="7" viewBox="0 0 8 7" style="left:87.6px;top:301.8px;"><rect x="0.9" y="0.9" width="6.2" height="5.2" fill="#e2e2e2" stroke="#5a5a5a" stroke-width="0.8"/><g fill="#5a5a5a"><rect x="0" y="0" width="1.6" height="1.6"/><rect x="6.4" y="0" width="1.6" height="1.6"/><rect x="0" y="5.4" width="1.6" height="1.6"/><rect x="6.4" y="5.4" width="1.6" height="1.6"/></g></svg><div class="a" style="left:90.5px;top:292.4px;width:1.3px;height:1.3px;background:#111;border-radius:50%;"></div>
<div class="t" style="left:103.5px;top:294.8px;font-size:8.8px;color:#ececec;">Elipse</div>

  <!-- bottom toolbar -->
  <div class="a" style="left:0;top:309px;width:180px;height:19px;background:#535353;border-top:1px solid #3e3e3e;box-sizing:border-box;"></div>
  <svg width="11" height="6" viewBox="0 0 11 6" style="left:29.5px;top:316.5px;"><g fill="none" stroke="#a4a4a4" stroke-width="1"><path d="M4.4,0.6 H3 A2.4,2.4 0 0 0 3,5.4 H4.4"/><path d="M6.6,0.6 H8 A2.4,2.4 0 0 1 8,5.4 H6.6"/><path d="M3.4,3 H7.6"/></g></svg>
  <div class="t" style="left:51px;top:313.5px;font-size:10.5px;font-style:italic;font-family:'Liberation Serif',serif;color:#9c9c9c;">fx</div>
  <svg width="10" height="8" viewBox="0 0 10 8" style="left:70px;top:315px;"><rect x="0" y="0" width="10" height="8" fill="#9c9c9c"/><circle cx="5" cy="4" r="2.2" fill="#535353"/></svg>
  <svg width="11" height="11" viewBox="0 0 11 11" style="left:91px;top:314px;"><circle cx="4.8" cy="4.8" r="4" fill="none" stroke="#dcdcdc" stroke-width="1"/><path d="M2,7.6 A4,4 0 0 0 7.6,2 Z" fill="#dcdcdc"/><rect x="8.6" y="9.4" width="1.6" height="1.2" fill="#dcdcdc"/></svg>
  <svg width="10" height="8" viewBox="0 0 10 8" style="left:110.5px;top:315px;"><path d="M0,0 H3.6 L4.6,1.2 H10 V8 H0 Z" fill="#c8c8c8"/></svg>
  <svg width="9" height="9" viewBox="0 0 9 9" style="left:131px;top:315px;"><path d="M0.6,0.6 H8.2 V8.2 H3.4 L0.6,5.4 Z" fill="none" stroke="#dcdcdc" stroke-width="1"/><path d="M0.6,5.4 H3.4 V8.2" fill="none" stroke="#dcdcdc" stroke-width="1"/></svg>
  <svg width="8" height="10" viewBox="0 0 8 10" style="left:151px;top:314px;"><g fill="none" stroke="#7c7c7c" stroke-width="0.9"><path d="M0.2,2.2 H7.8 M2.6,2 V0.6 H5.4 V2"/><path d="M1,2.4 V9.4 H7 V2.4 M3,3.8 V8 M5,3.8 V8"/></g></svg>
  <div class="a" style="left:0;top:328px;width:180px;height:1px;background:#3c3c3c;"></div>
  <div class="a" style="left:82px;top:330.5px;width:15px;height:2px;background:repeating-linear-gradient(to right,#424242 0,#424242 1px,transparent 1px,transparent 3px);"></div>
</div>


<!-- mouse cursor -->
<svg width="10" height="15" viewBox="0 0 10 15" style="left:410px;top:18.5px;"><path d="M0.6,0.6 L0.6,11.6 L3.2,9.2 L5.2,13.6 L6.8,12.9 L4.9,8.6 L8.4,8.4 Z" fill="#fff" stroke="#1a1a1a" stroke-width="0.9" stroke-linejoin="round"/></svg>

</body>
</html>
